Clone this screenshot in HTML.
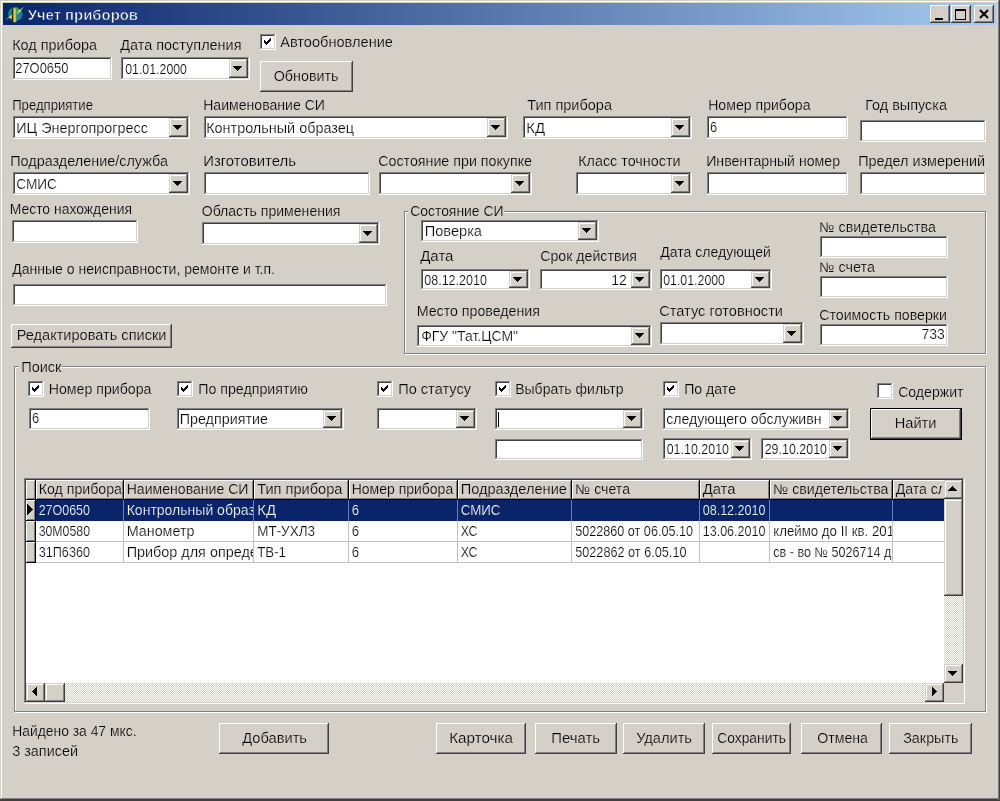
<!DOCTYPE html>
<html lang="ru"><head><meta charset="utf-8"><title>Учет приборов</title>
<style>html,body{margin:0;padding:0;background:#d4d0c8;overflow:hidden}body{width:1000px;height:801px;font-family:"Liberation Sans",sans-serif}</style>
</head><body>
<svg width="1000" height="801" viewBox="0 0 1000 801" font-family="'Liberation Sans', sans-serif" shape-rendering="crispEdges" style="display:block;will-change:transform">
<rect x="0" y="0" width="1000" height="801" fill="#d4d0c8"/>
<rect x="1" y="1" width="997" height="1" fill="#ffffff"/>
<rect x="1" y="1" width="1" height="798" fill="#ffffff"/>
<rect x="999" y="0" width="1" height="801" fill="#404040"/>
<rect x="0" y="799" width="1000" height="2" fill="#404040"/>
<rect x="998" y="1" width="1" height="799" fill="#808080"/>
<rect x="1" y="798" width="998" height="1" fill="#808080"/>
<defs><linearGradient id="tg" x1="0" x2="1" y1="0" y2="0"><stop offset="0" stop-color="#0a246a"/><stop offset="1" stop-color="#a6caf0"/></linearGradient><pattern id="dith" width="2" height="2" patternUnits="userSpaceOnUse"><rect width="2" height="2" fill="#d4d0c8"/><rect width="1" height="1" fill="#fff"/><rect x="1" y="1" width="1" height="1" fill="#fff"/></pattern></defs>
<rect x="3" y="3" width="993" height="22" fill="url(#tg)"/>
<g shape-rendering="geometricPrecision"><circle cx="15.2" cy="14.2" r="7" fill="#187f86"/><path d="M8.6 12.5 A7 7 0 0 1 19 8.3 L16 13 Z" fill="#1c9a58"/><path d="M16.5 13 L21.8 11.5 A7 7 0 0 1 19.5 19.8 L16.5 20 Z" fill="#1f7f9c"/><rect x="11.8" y="8.6" width="1.6" height="13.6" fill="#15301c"/><rect x="13.3" y="8.4" width="3" height="13.8" fill="#d4a82c"/><rect x="14.3" y="8.4" width="0.9" height="13.8" fill="#f0d868"/><path d="M24 6.8 L18.2 13.6 L17 11.6 L17 14.2 L18.6 12.6 L20 12.2 Z" fill="#e4f040"/><path d="M24 6.8 L19.6 10 L17.6 10.6 L18.4 12.8 Z" fill="#e4f040"/><path d="M5.8 19.8 L11.6 14.4 L11.8 18.4 L9.6 17.4 Z" fill="#e8f03c"/></g>
<text x="27.7" y="19.6" font-size="14" fill="#fff" textLength="110.3" lengthAdjust="spacingAndGlyphs" font-weight="bold" stroke="#112b73" stroke-width="0.55">Учет приборов</text>
<rect x="930" y="5" width="20" height="18" fill="#d4d0c8"/>
<rect x="930" y="5" width="19" height="1" fill="#ffffff"/>
<rect x="930" y="5" width="1" height="17" fill="#ffffff"/>
<rect x="930" y="22" width="20" height="1" fill="#404040"/>
<rect x="949" y="5" width="1" height="18" fill="#404040"/>
<rect x="931" y="6" width="17" height="1" fill="#d4d0c8"/>
<rect x="931" y="6" width="1" height="15" fill="#d4d0c8"/>
<rect x="931" y="21" width="18" height="1" fill="#808080"/>
<rect x="948" y="6" width="1" height="16" fill="#808080"/>
<rect x="935" y="18" width="8" height="2" fill="#000"/>
<rect x="951" y="5" width="20" height="18" fill="#d4d0c8"/>
<rect x="951" y="5" width="19" height="1" fill="#ffffff"/>
<rect x="951" y="5" width="1" height="17" fill="#ffffff"/>
<rect x="951" y="22" width="20" height="1" fill="#404040"/>
<rect x="970" y="5" width="1" height="18" fill="#404040"/>
<rect x="952" y="6" width="17" height="1" fill="#d4d0c8"/>
<rect x="952" y="6" width="1" height="15" fill="#d4d0c8"/>
<rect x="952" y="21" width="18" height="1" fill="#808080"/>
<rect x="969" y="6" width="1" height="16" fill="#808080"/>
<rect x="955" y="9" width="11" height="11" fill="#000"/>
<rect x="956" y="11" width="9" height="8" fill="#d4d0c8"/>
<rect x="974" y="5" width="20" height="18" fill="#d4d0c8"/>
<rect x="974" y="5" width="19" height="1" fill="#ffffff"/>
<rect x="974" y="5" width="1" height="17" fill="#ffffff"/>
<rect x="974" y="22" width="20" height="1" fill="#404040"/>
<rect x="993" y="5" width="1" height="18" fill="#404040"/>
<rect x="975" y="6" width="17" height="1" fill="#d4d0c8"/>
<rect x="975" y="6" width="1" height="15" fill="#d4d0c8"/>
<rect x="975" y="21" width="18" height="1" fill="#808080"/>
<rect x="992" y="6" width="1" height="16" fill="#808080"/>
<path d="M980 10 l8 8 M988 10 l-8 8" stroke="#000" stroke-width="2" fill="none" shape-rendering="geometricPrecision"/>
<text x="12.2" y="50.0" font-size="14" fill="#000000" textLength="84.8" lengthAdjust="spacingAndGlyphs" stroke="#d4d0c8" stroke-width="0.22">Код прибора</text>
<rect x="13" y="57" width="99" height="23" fill="#ffffff"/>
<rect x="13" y="57" width="98" height="1" fill="#808080"/>
<rect x="13" y="57" width="1" height="22" fill="#808080"/>
<rect x="13" y="79" width="99" height="1" fill="#ffffff"/>
<rect x="111" y="57" width="1" height="23" fill="#ffffff"/>
<rect x="14" y="58" width="96" height="1" fill="#404040"/>
<rect x="14" y="58" width="1" height="20" fill="#404040"/>
<rect x="14" y="78" width="97" height="1" fill="#d4d0c8"/>
<rect x="110" y="58" width="1" height="21" fill="#d4d0c8"/>
<text x="15.2" y="72.5" font-size="14" fill="#000000" textLength="53.3" lengthAdjust="spacingAndGlyphs" stroke="#ffffff" stroke-width="0.22">27О0650</text>
<text x="120.2" y="50.0" font-size="14" fill="#000000" textLength="121.3" lengthAdjust="spacingAndGlyphs" stroke="#d4d0c8" stroke-width="0.22">Дата поступления</text>
<rect x="121" y="57" width="129" height="23" fill="#ffffff"/>
<rect x="121" y="57" width="128" height="1" fill="#808080"/>
<rect x="121" y="57" width="1" height="22" fill="#808080"/>
<rect x="121" y="79" width="129" height="1" fill="#ffffff"/>
<rect x="249" y="57" width="1" height="23" fill="#ffffff"/>
<rect x="122" y="58" width="126" height="1" fill="#404040"/>
<rect x="122" y="58" width="1" height="20" fill="#404040"/>
<rect x="122" y="78" width="127" height="1" fill="#d4d0c8"/>
<rect x="248" y="58" width="1" height="21" fill="#d4d0c8"/>
<rect x="229" y="59" width="19" height="19" fill="#d4d0c8"/>
<rect x="229" y="59" width="18" height="1" fill="#d4d0c8"/>
<rect x="229" y="59" width="1" height="18" fill="#d4d0c8"/>
<rect x="229" y="77" width="19" height="1" fill="#404040"/>
<rect x="247" y="59" width="1" height="19" fill="#404040"/>
<rect x="230" y="60" width="16" height="1" fill="#ffffff"/>
<rect x="230" y="60" width="1" height="16" fill="#ffffff"/>
<rect x="230" y="76" width="17" height="1" fill="#808080"/>
<rect x="246" y="60" width="1" height="17" fill="#808080"/>
<rect x="233" y="66" width="9" height="1" fill="#000"/>
<rect x="234" y="67" width="7" height="1" fill="#000"/>
<rect x="235" y="68" width="5" height="1" fill="#000"/>
<rect x="236" y="69" width="3" height="1" fill="#000"/>
<rect x="237" y="70" width="1" height="1" fill="#000"/>
<text x="125.2" y="73.5" font-size="14" fill="#000000" textLength="61.8" lengthAdjust="spacingAndGlyphs" stroke="#ffffff" stroke-width="0.22">01.01.2000</text>
<rect x="260" y="34" width="16" height="16" fill="#ffffff"/>
<rect x="260" y="34" width="15" height="1" fill="#808080"/>
<rect x="260" y="34" width="1" height="15" fill="#808080"/>
<rect x="260" y="49" width="16" height="1" fill="#ffffff"/>
<rect x="275" y="34" width="1" height="16" fill="#ffffff"/>
<rect x="261" y="35" width="13" height="1" fill="#404040"/>
<rect x="261" y="35" width="1" height="13" fill="#404040"/>
<rect x="261" y="48" width="14" height="1" fill="#d4d0c8"/>
<rect x="274" y="35" width="1" height="14" fill="#d4d0c8"/>
<rect x="264" y="40" width="1" height="3" fill="#000"/>
<rect x="265" y="41" width="1" height="3" fill="#000"/>
<rect x="266" y="42" width="1" height="3" fill="#000"/>
<rect x="267" y="41" width="1" height="3" fill="#000"/>
<rect x="268" y="40" width="1" height="3" fill="#000"/>
<rect x="269" y="39" width="1" height="3" fill="#000"/>
<rect x="270" y="38" width="1" height="3" fill="#000"/>
<text x="280.2" y="47.0" font-size="14" fill="#000000" textLength="112.8" lengthAdjust="spacingAndGlyphs" stroke="#d4d0c8" stroke-width="0.22">Автообновление</text>
<rect x="260" y="61" width="93" height="31" fill="#d4d0c8"/>
<rect x="260" y="61" width="92" height="1" fill="#ffffff"/>
<rect x="260" y="61" width="1" height="30" fill="#ffffff"/>
<rect x="260" y="91" width="93" height="1" fill="#404040"/>
<rect x="352" y="61" width="1" height="31" fill="#404040"/>
<rect x="261" y="62" width="90" height="1" fill="#d4d0c8"/>
<rect x="261" y="62" width="1" height="28" fill="#d4d0c8"/>
<rect x="261" y="90" width="91" height="1" fill="#808080"/>
<rect x="351" y="62" width="1" height="29" fill="#808080"/>
<text x="273.7" y="80.5" font-size="14" fill="#000000" textLength="64.8" lengthAdjust="spacingAndGlyphs" stroke="#d4d0c8" stroke-width="0.22">Обновить</text>
<text x="12.2" y="109.5" font-size="14" fill="#000000" textLength="80.8" lengthAdjust="spacingAndGlyphs" stroke="#d4d0c8" stroke-width="0.22">Предприятие</text>
<rect x="13" y="116" width="177" height="23" fill="#ffffff"/>
<rect x="13" y="116" width="176" height="1" fill="#808080"/>
<rect x="13" y="116" width="1" height="22" fill="#808080"/>
<rect x="13" y="138" width="177" height="1" fill="#ffffff"/>
<rect x="189" y="116" width="1" height="23" fill="#ffffff"/>
<rect x="14" y="117" width="174" height="1" fill="#404040"/>
<rect x="14" y="117" width="1" height="20" fill="#404040"/>
<rect x="14" y="137" width="175" height="1" fill="#d4d0c8"/>
<rect x="188" y="117" width="1" height="21" fill="#d4d0c8"/>
<rect x="169" y="118" width="19" height="19" fill="#d4d0c8"/>
<rect x="169" y="118" width="18" height="1" fill="#d4d0c8"/>
<rect x="169" y="118" width="1" height="18" fill="#d4d0c8"/>
<rect x="169" y="136" width="19" height="1" fill="#404040"/>
<rect x="187" y="118" width="1" height="19" fill="#404040"/>
<rect x="170" y="119" width="16" height="1" fill="#ffffff"/>
<rect x="170" y="119" width="1" height="16" fill="#ffffff"/>
<rect x="170" y="135" width="17" height="1" fill="#808080"/>
<rect x="186" y="119" width="1" height="17" fill="#808080"/>
<rect x="173" y="125" width="9" height="1" fill="#000"/>
<rect x="174" y="126" width="7" height="1" fill="#000"/>
<rect x="175" y="127" width="5" height="1" fill="#000"/>
<rect x="176" y="128" width="3" height="1" fill="#000"/>
<rect x="177" y="129" width="1" height="1" fill="#000"/>
<text x="16.2" y="132.5" font-size="14" fill="#000000" textLength="131.8" lengthAdjust="spacingAndGlyphs" stroke="#ffffff" stroke-width="0.22">ИЦ Энергопрогресс</text>
<text x="203.2" y="109.5" font-size="14" fill="#000000" textLength="121.8" lengthAdjust="spacingAndGlyphs" stroke="#d4d0c8" stroke-width="0.22">Наименование СИ</text>
<rect x="204" y="116" width="304" height="23" fill="#ffffff"/>
<rect x="204" y="116" width="303" height="1" fill="#808080"/>
<rect x="204" y="116" width="1" height="22" fill="#808080"/>
<rect x="204" y="138" width="304" height="1" fill="#ffffff"/>
<rect x="507" y="116" width="1" height="23" fill="#ffffff"/>
<rect x="205" y="117" width="301" height="1" fill="#404040"/>
<rect x="205" y="117" width="1" height="20" fill="#404040"/>
<rect x="205" y="137" width="302" height="1" fill="#d4d0c8"/>
<rect x="506" y="117" width="1" height="21" fill="#d4d0c8"/>
<rect x="487" y="118" width="19" height="19" fill="#d4d0c8"/>
<rect x="487" y="118" width="18" height="1" fill="#d4d0c8"/>
<rect x="487" y="118" width="1" height="18" fill="#d4d0c8"/>
<rect x="487" y="136" width="19" height="1" fill="#404040"/>
<rect x="505" y="118" width="1" height="19" fill="#404040"/>
<rect x="488" y="119" width="16" height="1" fill="#ffffff"/>
<rect x="488" y="119" width="1" height="16" fill="#ffffff"/>
<rect x="488" y="135" width="17" height="1" fill="#808080"/>
<rect x="504" y="119" width="1" height="17" fill="#808080"/>
<rect x="491" y="125" width="9" height="1" fill="#000"/>
<rect x="492" y="126" width="7" height="1" fill="#000"/>
<rect x="493" y="127" width="5" height="1" fill="#000"/>
<rect x="494" y="128" width="3" height="1" fill="#000"/>
<rect x="495" y="129" width="1" height="1" fill="#000"/>
<text x="206.2" y="132.5" font-size="14" fill="#000000" textLength="147.8" lengthAdjust="spacingAndGlyphs" stroke="#ffffff" stroke-width="0.22">Контрольный образец</text>
<text x="527.2" y="109.5" font-size="14" fill="#000000" textLength="84.8" lengthAdjust="spacingAndGlyphs" stroke="#d4d0c8" stroke-width="0.22">Тип прибора</text>
<rect x="523" y="116" width="169" height="23" fill="#ffffff"/>
<rect x="523" y="116" width="168" height="1" fill="#808080"/>
<rect x="523" y="116" width="1" height="22" fill="#808080"/>
<rect x="523" y="138" width="169" height="1" fill="#ffffff"/>
<rect x="691" y="116" width="1" height="23" fill="#ffffff"/>
<rect x="524" y="117" width="166" height="1" fill="#404040"/>
<rect x="524" y="117" width="1" height="20" fill="#404040"/>
<rect x="524" y="137" width="167" height="1" fill="#d4d0c8"/>
<rect x="690" y="117" width="1" height="21" fill="#d4d0c8"/>
<rect x="671" y="118" width="19" height="19" fill="#d4d0c8"/>
<rect x="671" y="118" width="18" height="1" fill="#d4d0c8"/>
<rect x="671" y="118" width="1" height="18" fill="#d4d0c8"/>
<rect x="671" y="136" width="19" height="1" fill="#404040"/>
<rect x="689" y="118" width="1" height="19" fill="#404040"/>
<rect x="672" y="119" width="16" height="1" fill="#ffffff"/>
<rect x="672" y="119" width="1" height="16" fill="#ffffff"/>
<rect x="672" y="135" width="17" height="1" fill="#808080"/>
<rect x="688" y="119" width="1" height="17" fill="#808080"/>
<rect x="675" y="125" width="9" height="1" fill="#000"/>
<rect x="676" y="126" width="7" height="1" fill="#000"/>
<rect x="677" y="127" width="5" height="1" fill="#000"/>
<rect x="678" y="128" width="3" height="1" fill="#000"/>
<rect x="679" y="129" width="1" height="1" fill="#000"/>
<text x="526.2" y="132.5" font-size="14" fill="#000000" textLength="18.8" lengthAdjust="spacingAndGlyphs" stroke="#ffffff" stroke-width="0.22">КД</text>
<text x="708.2" y="109.5" font-size="14" fill="#000000" textLength="102.3" lengthAdjust="spacingAndGlyphs" stroke="#d4d0c8" stroke-width="0.22">Номер прибора</text>
<rect x="707" y="116" width="141" height="23" fill="#ffffff"/>
<rect x="707" y="116" width="140" height="1" fill="#808080"/>
<rect x="707" y="116" width="1" height="22" fill="#808080"/>
<rect x="707" y="138" width="141" height="1" fill="#ffffff"/>
<rect x="847" y="116" width="1" height="23" fill="#ffffff"/>
<rect x="708" y="117" width="138" height="1" fill="#404040"/>
<rect x="708" y="117" width="1" height="20" fill="#404040"/>
<rect x="708" y="137" width="139" height="1" fill="#d4d0c8"/>
<rect x="846" y="117" width="1" height="21" fill="#d4d0c8"/>
<text x="710.0" y="131.5" font-size="14" fill="#000000" textLength="7.2" lengthAdjust="spacingAndGlyphs" stroke="#ffffff" stroke-width="0.22">6</text>
<text x="865.2" y="109.5" font-size="14" fill="#000000" textLength="81.8" lengthAdjust="spacingAndGlyphs" stroke="#d4d0c8" stroke-width="0.22">Год выпуска</text>
<rect x="860" y="120" width="126" height="22" fill="#ffffff"/>
<rect x="860" y="120" width="125" height="1" fill="#808080"/>
<rect x="860" y="120" width="1" height="21" fill="#808080"/>
<rect x="860" y="141" width="126" height="1" fill="#ffffff"/>
<rect x="985" y="120" width="1" height="22" fill="#ffffff"/>
<rect x="861" y="121" width="123" height="1" fill="#404040"/>
<rect x="861" y="121" width="1" height="19" fill="#404040"/>
<rect x="861" y="140" width="124" height="1" fill="#d4d0c8"/>
<rect x="984" y="121" width="1" height="20" fill="#d4d0c8"/>
<text x="10.2" y="165.5" font-size="14" fill="#000000" textLength="157.8" lengthAdjust="spacingAndGlyphs" stroke="#d4d0c8" stroke-width="0.22">Подразделение/служба</text>
<rect x="13" y="172" width="177" height="23" fill="#ffffff"/>
<rect x="13" y="172" width="176" height="1" fill="#808080"/>
<rect x="13" y="172" width="1" height="22" fill="#808080"/>
<rect x="13" y="194" width="177" height="1" fill="#ffffff"/>
<rect x="189" y="172" width="1" height="23" fill="#ffffff"/>
<rect x="14" y="173" width="174" height="1" fill="#404040"/>
<rect x="14" y="173" width="1" height="20" fill="#404040"/>
<rect x="14" y="193" width="175" height="1" fill="#d4d0c8"/>
<rect x="188" y="173" width="1" height="21" fill="#d4d0c8"/>
<rect x="169" y="174" width="19" height="19" fill="#d4d0c8"/>
<rect x="169" y="174" width="18" height="1" fill="#d4d0c8"/>
<rect x="169" y="174" width="1" height="18" fill="#d4d0c8"/>
<rect x="169" y="192" width="19" height="1" fill="#404040"/>
<rect x="187" y="174" width="1" height="19" fill="#404040"/>
<rect x="170" y="175" width="16" height="1" fill="#ffffff"/>
<rect x="170" y="175" width="1" height="16" fill="#ffffff"/>
<rect x="170" y="191" width="17" height="1" fill="#808080"/>
<rect x="186" y="175" width="1" height="17" fill="#808080"/>
<rect x="173" y="181" width="9" height="1" fill="#000"/>
<rect x="174" y="182" width="7" height="1" fill="#000"/>
<rect x="175" y="183" width="5" height="1" fill="#000"/>
<rect x="176" y="184" width="3" height="1" fill="#000"/>
<rect x="177" y="185" width="1" height="1" fill="#000"/>
<text x="16.2" y="188.5" font-size="14" fill="#000000" textLength="40.8" lengthAdjust="spacingAndGlyphs" stroke="#ffffff" stroke-width="0.22">СМИС</text>
<text x="203.2" y="165.5" font-size="14" fill="#000000" textLength="92.8" lengthAdjust="spacingAndGlyphs" stroke="#d4d0c8" stroke-width="0.22">Изготовитель</text>
<rect x="204" y="172" width="166" height="23" fill="#ffffff"/>
<rect x="204" y="172" width="165" height="1" fill="#808080"/>
<rect x="204" y="172" width="1" height="22" fill="#808080"/>
<rect x="204" y="194" width="166" height="1" fill="#ffffff"/>
<rect x="369" y="172" width="1" height="23" fill="#ffffff"/>
<rect x="205" y="173" width="163" height="1" fill="#404040"/>
<rect x="205" y="173" width="1" height="20" fill="#404040"/>
<rect x="205" y="193" width="164" height="1" fill="#d4d0c8"/>
<rect x="368" y="173" width="1" height="21" fill="#d4d0c8"/>
<text x="378.2" y="165.5" font-size="14" fill="#000000" textLength="153.8" lengthAdjust="spacingAndGlyphs" stroke="#d4d0c8" stroke-width="0.22">Состояние при покупке</text>
<rect x="379" y="172" width="153" height="23" fill="#ffffff"/>
<rect x="379" y="172" width="152" height="1" fill="#808080"/>
<rect x="379" y="172" width="1" height="22" fill="#808080"/>
<rect x="379" y="194" width="153" height="1" fill="#ffffff"/>
<rect x="531" y="172" width="1" height="23" fill="#ffffff"/>
<rect x="380" y="173" width="150" height="1" fill="#404040"/>
<rect x="380" y="173" width="1" height="20" fill="#404040"/>
<rect x="380" y="193" width="151" height="1" fill="#d4d0c8"/>
<rect x="530" y="173" width="1" height="21" fill="#d4d0c8"/>
<rect x="511" y="174" width="19" height="19" fill="#d4d0c8"/>
<rect x="511" y="174" width="18" height="1" fill="#d4d0c8"/>
<rect x="511" y="174" width="1" height="18" fill="#d4d0c8"/>
<rect x="511" y="192" width="19" height="1" fill="#404040"/>
<rect x="529" y="174" width="1" height="19" fill="#404040"/>
<rect x="512" y="175" width="16" height="1" fill="#ffffff"/>
<rect x="512" y="175" width="1" height="16" fill="#ffffff"/>
<rect x="512" y="191" width="17" height="1" fill="#808080"/>
<rect x="528" y="175" width="1" height="17" fill="#808080"/>
<rect x="515" y="181" width="9" height="1" fill="#000"/>
<rect x="516" y="182" width="7" height="1" fill="#000"/>
<rect x="517" y="183" width="5" height="1" fill="#000"/>
<rect x="518" y="184" width="3" height="1" fill="#000"/>
<rect x="519" y="185" width="1" height="1" fill="#000"/>
<text x="578.2" y="165.5" font-size="14" fill="#000000" textLength="102.3" lengthAdjust="spacingAndGlyphs" stroke="#d4d0c8" stroke-width="0.22">Класс точности</text>
<rect x="576" y="172" width="116" height="23" fill="#ffffff"/>
<rect x="576" y="172" width="115" height="1" fill="#808080"/>
<rect x="576" y="172" width="1" height="22" fill="#808080"/>
<rect x="576" y="194" width="116" height="1" fill="#ffffff"/>
<rect x="691" y="172" width="1" height="23" fill="#ffffff"/>
<rect x="577" y="173" width="113" height="1" fill="#404040"/>
<rect x="577" y="173" width="1" height="20" fill="#404040"/>
<rect x="577" y="193" width="114" height="1" fill="#d4d0c8"/>
<rect x="690" y="173" width="1" height="21" fill="#d4d0c8"/>
<rect x="671" y="174" width="19" height="19" fill="#d4d0c8"/>
<rect x="671" y="174" width="18" height="1" fill="#d4d0c8"/>
<rect x="671" y="174" width="1" height="18" fill="#d4d0c8"/>
<rect x="671" y="192" width="19" height="1" fill="#404040"/>
<rect x="689" y="174" width="1" height="19" fill="#404040"/>
<rect x="672" y="175" width="16" height="1" fill="#ffffff"/>
<rect x="672" y="175" width="1" height="16" fill="#ffffff"/>
<rect x="672" y="191" width="17" height="1" fill="#808080"/>
<rect x="688" y="175" width="1" height="17" fill="#808080"/>
<rect x="675" y="181" width="9" height="1" fill="#000"/>
<rect x="676" y="182" width="7" height="1" fill="#000"/>
<rect x="677" y="183" width="5" height="1" fill="#000"/>
<rect x="678" y="184" width="3" height="1" fill="#000"/>
<rect x="679" y="185" width="1" height="1" fill="#000"/>
<text x="706.2" y="165.5" font-size="14" fill="#000000" textLength="133.8" lengthAdjust="spacingAndGlyphs" stroke="#d4d0c8" stroke-width="0.22">Инвентарный номер</text>
<rect x="707" y="172" width="141" height="23" fill="#ffffff"/>
<rect x="707" y="172" width="140" height="1" fill="#808080"/>
<rect x="707" y="172" width="1" height="22" fill="#808080"/>
<rect x="707" y="194" width="141" height="1" fill="#ffffff"/>
<rect x="847" y="172" width="1" height="23" fill="#ffffff"/>
<rect x="708" y="173" width="138" height="1" fill="#404040"/>
<rect x="708" y="173" width="1" height="20" fill="#404040"/>
<rect x="708" y="193" width="139" height="1" fill="#d4d0c8"/>
<rect x="846" y="173" width="1" height="21" fill="#d4d0c8"/>
<text x="858.2" y="165.5" font-size="14" fill="#000000" textLength="126.8" lengthAdjust="spacingAndGlyphs" stroke="#d4d0c8" stroke-width="0.22">Предел измерений</text>
<rect x="860" y="172" width="126" height="23" fill="#ffffff"/>
<rect x="860" y="172" width="125" height="1" fill="#808080"/>
<rect x="860" y="172" width="1" height="22" fill="#808080"/>
<rect x="860" y="194" width="126" height="1" fill="#ffffff"/>
<rect x="985" y="172" width="1" height="23" fill="#ffffff"/>
<rect x="861" y="173" width="123" height="1" fill="#404040"/>
<rect x="861" y="173" width="1" height="20" fill="#404040"/>
<rect x="861" y="193" width="124" height="1" fill="#d4d0c8"/>
<rect x="984" y="173" width="1" height="21" fill="#d4d0c8"/>
<text x="9.7" y="213.5" font-size="14" fill="#000000" textLength="122.3" lengthAdjust="spacingAndGlyphs" stroke="#d4d0c8" stroke-width="0.22">Место нахождения</text>
<rect x="12" y="220" width="126" height="23" fill="#ffffff"/>
<rect x="12" y="220" width="125" height="1" fill="#808080"/>
<rect x="12" y="220" width="1" height="22" fill="#808080"/>
<rect x="12" y="242" width="126" height="1" fill="#ffffff"/>
<rect x="137" y="220" width="1" height="23" fill="#ffffff"/>
<rect x="13" y="221" width="123" height="1" fill="#404040"/>
<rect x="13" y="221" width="1" height="20" fill="#404040"/>
<rect x="13" y="241" width="124" height="1" fill="#d4d0c8"/>
<rect x="136" y="221" width="1" height="21" fill="#d4d0c8"/>
<text x="201.7" y="215.5" font-size="14" fill="#000000" textLength="138.8" lengthAdjust="spacingAndGlyphs" stroke="#d4d0c8" stroke-width="0.22">Область применения</text>
<rect x="202" y="222" width="178" height="23" fill="#ffffff"/>
<rect x="202" y="222" width="177" height="1" fill="#808080"/>
<rect x="202" y="222" width="1" height="22" fill="#808080"/>
<rect x="202" y="244" width="178" height="1" fill="#ffffff"/>
<rect x="379" y="222" width="1" height="23" fill="#ffffff"/>
<rect x="203" y="223" width="175" height="1" fill="#404040"/>
<rect x="203" y="223" width="1" height="20" fill="#404040"/>
<rect x="203" y="243" width="176" height="1" fill="#d4d0c8"/>
<rect x="378" y="223" width="1" height="21" fill="#d4d0c8"/>
<rect x="359" y="224" width="19" height="19" fill="#d4d0c8"/>
<rect x="359" y="224" width="18" height="1" fill="#d4d0c8"/>
<rect x="359" y="224" width="1" height="18" fill="#d4d0c8"/>
<rect x="359" y="242" width="19" height="1" fill="#404040"/>
<rect x="377" y="224" width="1" height="19" fill="#404040"/>
<rect x="360" y="225" width="16" height="1" fill="#ffffff"/>
<rect x="360" y="225" width="1" height="16" fill="#ffffff"/>
<rect x="360" y="241" width="17" height="1" fill="#808080"/>
<rect x="376" y="225" width="1" height="17" fill="#808080"/>
<rect x="363" y="231" width="9" height="1" fill="#000"/>
<rect x="364" y="232" width="7" height="1" fill="#000"/>
<rect x="365" y="233" width="5" height="1" fill="#000"/>
<rect x="366" y="234" width="3" height="1" fill="#000"/>
<rect x="367" y="235" width="1" height="1" fill="#000"/>
<text x="12.2" y="273.5" font-size="14" fill="#000000" textLength="262.8" lengthAdjust="spacingAndGlyphs" stroke="#d4d0c8" stroke-width="0.22">Данные о неисправности, ремонте и т.п.</text>
<rect x="13" y="284" width="374" height="22" fill="#ffffff"/>
<rect x="13" y="284" width="373" height="1" fill="#808080"/>
<rect x="13" y="284" width="1" height="21" fill="#808080"/>
<rect x="13" y="305" width="374" height="1" fill="#ffffff"/>
<rect x="386" y="284" width="1" height="22" fill="#ffffff"/>
<rect x="14" y="285" width="371" height="1" fill="#404040"/>
<rect x="14" y="285" width="1" height="19" fill="#404040"/>
<rect x="14" y="304" width="372" height="1" fill="#d4d0c8"/>
<rect x="385" y="285" width="1" height="20" fill="#d4d0c8"/>
<rect x="11" y="324" width="161" height="24" fill="#d4d0c8"/>
<rect x="11" y="324" width="160" height="1" fill="#ffffff"/>
<rect x="11" y="324" width="1" height="23" fill="#ffffff"/>
<rect x="11" y="347" width="161" height="1" fill="#404040"/>
<rect x="171" y="324" width="1" height="24" fill="#404040"/>
<rect x="12" y="325" width="158" height="1" fill="#d4d0c8"/>
<rect x="12" y="325" width="1" height="21" fill="#d4d0c8"/>
<rect x="12" y="346" width="159" height="1" fill="#808080"/>
<rect x="170" y="325" width="1" height="22" fill="#808080"/>
<text x="16.7" y="339.5" font-size="14" fill="#000000" textLength="149.8" lengthAdjust="spacingAndGlyphs" stroke="#d4d0c8" stroke-width="0.22">Редактировать списки</text>
<rect x="405" y="212" width="582" height="1" fill="#ffffff"/>
<rect x="405" y="354" width="582" height="1" fill="#ffffff"/>
<rect x="405" y="212" width="1" height="143" fill="#ffffff"/>
<rect x="986" y="212" width="1" height="143" fill="#ffffff"/>
<rect x="404" y="211" width="582" height="1" fill="#808080"/>
<rect x="404" y="353" width="582" height="1" fill="#808080"/>
<rect x="404" y="211" width="1" height="143" fill="#808080"/>
<rect x="985" y="211" width="1" height="143" fill="#808080"/>
<rect x="408" y="210" width="96" height="4" fill="#d4d0c8"/>
<text x="410.2" y="216.0" font-size="14" fill="#000000" textLength="93.3" lengthAdjust="spacingAndGlyphs" stroke="#d4d0c8" stroke-width="0.22">Состояние СИ</text>
<rect x="421" y="220" width="178" height="22" fill="#ffffff"/>
<rect x="421" y="220" width="177" height="1" fill="#808080"/>
<rect x="421" y="220" width="1" height="21" fill="#808080"/>
<rect x="421" y="241" width="178" height="1" fill="#ffffff"/>
<rect x="598" y="220" width="1" height="22" fill="#ffffff"/>
<rect x="422" y="221" width="175" height="1" fill="#404040"/>
<rect x="422" y="221" width="1" height="19" fill="#404040"/>
<rect x="422" y="240" width="176" height="1" fill="#d4d0c8"/>
<rect x="597" y="221" width="1" height="20" fill="#d4d0c8"/>
<rect x="578" y="222" width="19" height="18" fill="#d4d0c8"/>
<rect x="578" y="222" width="18" height="1" fill="#d4d0c8"/>
<rect x="578" y="222" width="1" height="17" fill="#d4d0c8"/>
<rect x="578" y="239" width="19" height="1" fill="#404040"/>
<rect x="596" y="222" width="1" height="18" fill="#404040"/>
<rect x="579" y="223" width="16" height="1" fill="#ffffff"/>
<rect x="579" y="223" width="1" height="15" fill="#ffffff"/>
<rect x="579" y="238" width="17" height="1" fill="#808080"/>
<rect x="595" y="223" width="1" height="16" fill="#808080"/>
<rect x="582" y="228" width="9" height="1" fill="#000"/>
<rect x="583" y="229" width="7" height="1" fill="#000"/>
<rect x="584" y="230" width="5" height="1" fill="#000"/>
<rect x="585" y="231" width="3" height="1" fill="#000"/>
<rect x="586" y="232" width="1" height="1" fill="#000"/>
<text x="424.7" y="236.0" font-size="14" fill="#000000" textLength="57.3" lengthAdjust="spacingAndGlyphs" stroke="#ffffff" stroke-width="0.22">Поверка</text>
<text x="420.2" y="260.5" font-size="14" fill="#000000" textLength="33.3" lengthAdjust="spacingAndGlyphs" stroke="#d4d0c8" stroke-width="0.22">Дата</text>
<rect x="421" y="269" width="109" height="21" fill="#ffffff"/>
<rect x="421" y="269" width="108" height="1" fill="#808080"/>
<rect x="421" y="269" width="1" height="20" fill="#808080"/>
<rect x="421" y="289" width="109" height="1" fill="#ffffff"/>
<rect x="529" y="269" width="1" height="21" fill="#ffffff"/>
<rect x="422" y="270" width="106" height="1" fill="#404040"/>
<rect x="422" y="270" width="1" height="18" fill="#404040"/>
<rect x="422" y="288" width="107" height="1" fill="#d4d0c8"/>
<rect x="528" y="270" width="1" height="19" fill="#d4d0c8"/>
<rect x="509" y="271" width="19" height="17" fill="#d4d0c8"/>
<rect x="509" y="271" width="18" height="1" fill="#d4d0c8"/>
<rect x="509" y="271" width="1" height="16" fill="#d4d0c8"/>
<rect x="509" y="287" width="19" height="1" fill="#404040"/>
<rect x="527" y="271" width="1" height="17" fill="#404040"/>
<rect x="510" y="272" width="16" height="1" fill="#ffffff"/>
<rect x="510" y="272" width="1" height="14" fill="#ffffff"/>
<rect x="510" y="286" width="17" height="1" fill="#808080"/>
<rect x="526" y="272" width="1" height="15" fill="#808080"/>
<rect x="513" y="277" width="9" height="1" fill="#000"/>
<rect x="514" y="278" width="7" height="1" fill="#000"/>
<rect x="515" y="279" width="5" height="1" fill="#000"/>
<rect x="516" y="280" width="3" height="1" fill="#000"/>
<rect x="517" y="281" width="1" height="1" fill="#000"/>
<text x="424.2" y="284.5" font-size="14" fill="#000000" textLength="62.8" lengthAdjust="spacingAndGlyphs" stroke="#ffffff" stroke-width="0.22">08.12.2010</text>
<text x="540.2" y="260.5" font-size="14" fill="#000000" textLength="96.8" lengthAdjust="spacingAndGlyphs" stroke="#d4d0c8" stroke-width="0.22">Срок действия</text>
<rect x="540" y="269" width="112" height="21" fill="#ffffff"/>
<rect x="540" y="269" width="111" height="1" fill="#808080"/>
<rect x="540" y="269" width="1" height="20" fill="#808080"/>
<rect x="540" y="289" width="112" height="1" fill="#ffffff"/>
<rect x="651" y="269" width="1" height="21" fill="#ffffff"/>
<rect x="541" y="270" width="109" height="1" fill="#404040"/>
<rect x="541" y="270" width="1" height="18" fill="#404040"/>
<rect x="541" y="288" width="110" height="1" fill="#d4d0c8"/>
<rect x="650" y="270" width="1" height="19" fill="#d4d0c8"/>
<rect x="631" y="271" width="19" height="17" fill="#d4d0c8"/>
<rect x="631" y="271" width="18" height="1" fill="#d4d0c8"/>
<rect x="631" y="271" width="1" height="16" fill="#d4d0c8"/>
<rect x="631" y="287" width="19" height="1" fill="#404040"/>
<rect x="649" y="271" width="1" height="17" fill="#404040"/>
<rect x="632" y="272" width="16" height="1" fill="#ffffff"/>
<rect x="632" y="272" width="1" height="14" fill="#ffffff"/>
<rect x="632" y="286" width="17" height="1" fill="#808080"/>
<rect x="648" y="272" width="1" height="15" fill="#808080"/>
<rect x="635" y="277" width="9" height="1" fill="#000"/>
<rect x="636" y="278" width="7" height="1" fill="#000"/>
<rect x="637" y="279" width="5" height="1" fill="#000"/>
<rect x="638" y="280" width="3" height="1" fill="#000"/>
<rect x="639" y="281" width="1" height="1" fill="#000"/>
<text x="626.8" y="284.5" font-size="14" fill="#000000" text-anchor="end" stroke="#ffffff" stroke-width="0.22">12</text>
<text x="660.2" y="257.0" font-size="14" fill="#000000" textLength="110.8" lengthAdjust="spacingAndGlyphs" stroke="#d4d0c8" stroke-width="0.22">Дата следующей</text>
<rect x="660" y="269" width="112" height="21" fill="#ffffff"/>
<rect x="660" y="269" width="111" height="1" fill="#808080"/>
<rect x="660" y="269" width="1" height="20" fill="#808080"/>
<rect x="660" y="289" width="112" height="1" fill="#ffffff"/>
<rect x="771" y="269" width="1" height="21" fill="#ffffff"/>
<rect x="661" y="270" width="109" height="1" fill="#404040"/>
<rect x="661" y="270" width="1" height="18" fill="#404040"/>
<rect x="661" y="288" width="110" height="1" fill="#d4d0c8"/>
<rect x="770" y="270" width="1" height="19" fill="#d4d0c8"/>
<rect x="751" y="271" width="19" height="17" fill="#d4d0c8"/>
<rect x="751" y="271" width="18" height="1" fill="#d4d0c8"/>
<rect x="751" y="271" width="1" height="16" fill="#d4d0c8"/>
<rect x="751" y="287" width="19" height="1" fill="#404040"/>
<rect x="769" y="271" width="1" height="17" fill="#404040"/>
<rect x="752" y="272" width="16" height="1" fill="#ffffff"/>
<rect x="752" y="272" width="1" height="14" fill="#ffffff"/>
<rect x="752" y="286" width="17" height="1" fill="#808080"/>
<rect x="768" y="272" width="1" height="15" fill="#808080"/>
<rect x="755" y="277" width="9" height="1" fill="#000"/>
<rect x="756" y="278" width="7" height="1" fill="#000"/>
<rect x="757" y="279" width="5" height="1" fill="#000"/>
<rect x="758" y="280" width="3" height="1" fill="#000"/>
<rect x="759" y="281" width="1" height="1" fill="#000"/>
<text x="663.2" y="284.5" font-size="14" fill="#000000" textLength="61.8" lengthAdjust="spacingAndGlyphs" stroke="#ffffff" stroke-width="0.22">01.01.2000</text>
<text x="416.7" y="316.0" font-size="14" fill="#000000" textLength="123.3" lengthAdjust="spacingAndGlyphs" stroke="#d4d0c8" stroke-width="0.22">Место проведения</text>
<rect x="417" y="325" width="235" height="22" fill="#ffffff"/>
<rect x="417" y="325" width="234" height="1" fill="#808080"/>
<rect x="417" y="325" width="1" height="21" fill="#808080"/>
<rect x="417" y="346" width="235" height="1" fill="#ffffff"/>
<rect x="651" y="325" width="1" height="22" fill="#ffffff"/>
<rect x="418" y="326" width="232" height="1" fill="#404040"/>
<rect x="418" y="326" width="1" height="19" fill="#404040"/>
<rect x="418" y="345" width="233" height="1" fill="#d4d0c8"/>
<rect x="650" y="326" width="1" height="20" fill="#d4d0c8"/>
<rect x="631" y="327" width="19" height="18" fill="#d4d0c8"/>
<rect x="631" y="327" width="18" height="1" fill="#d4d0c8"/>
<rect x="631" y="327" width="1" height="17" fill="#d4d0c8"/>
<rect x="631" y="344" width="19" height="1" fill="#404040"/>
<rect x="649" y="327" width="1" height="18" fill="#404040"/>
<rect x="632" y="328" width="16" height="1" fill="#ffffff"/>
<rect x="632" y="328" width="1" height="15" fill="#ffffff"/>
<rect x="632" y="343" width="17" height="1" fill="#808080"/>
<rect x="648" y="328" width="1" height="16" fill="#808080"/>
<rect x="635" y="333" width="9" height="1" fill="#000"/>
<rect x="636" y="334" width="7" height="1" fill="#000"/>
<rect x="637" y="335" width="5" height="1" fill="#000"/>
<rect x="638" y="336" width="3" height="1" fill="#000"/>
<rect x="639" y="337" width="1" height="1" fill="#000"/>
<text x="421.2" y="341.0" font-size="14" fill="#000000" textLength="96.8" lengthAdjust="spacingAndGlyphs" stroke="#ffffff" stroke-width="0.22">ФГУ &quot;Тат.ЦСМ&quot;</text>
<text x="659.2" y="316.0" font-size="14" fill="#000000" textLength="123.8" lengthAdjust="spacingAndGlyphs" stroke="#d4d0c8" stroke-width="0.22">Статус готовности</text>
<rect x="660" y="322" width="144" height="23" fill="#ffffff"/>
<rect x="660" y="322" width="143" height="1" fill="#808080"/>
<rect x="660" y="322" width="1" height="22" fill="#808080"/>
<rect x="660" y="344" width="144" height="1" fill="#ffffff"/>
<rect x="803" y="322" width="1" height="23" fill="#ffffff"/>
<rect x="661" y="323" width="141" height="1" fill="#404040"/>
<rect x="661" y="323" width="1" height="20" fill="#404040"/>
<rect x="661" y="343" width="142" height="1" fill="#d4d0c8"/>
<rect x="802" y="323" width="1" height="21" fill="#d4d0c8"/>
<rect x="783" y="324" width="19" height="19" fill="#d4d0c8"/>
<rect x="783" y="324" width="18" height="1" fill="#d4d0c8"/>
<rect x="783" y="324" width="1" height="18" fill="#d4d0c8"/>
<rect x="783" y="342" width="19" height="1" fill="#404040"/>
<rect x="801" y="324" width="1" height="19" fill="#404040"/>
<rect x="784" y="325" width="16" height="1" fill="#ffffff"/>
<rect x="784" y="325" width="1" height="16" fill="#ffffff"/>
<rect x="784" y="341" width="17" height="1" fill="#808080"/>
<rect x="800" y="325" width="1" height="17" fill="#808080"/>
<rect x="787" y="331" width="9" height="1" fill="#000"/>
<rect x="788" y="332" width="7" height="1" fill="#000"/>
<rect x="789" y="333" width="5" height="1" fill="#000"/>
<rect x="790" y="334" width="3" height="1" fill="#000"/>
<rect x="791" y="335" width="1" height="1" fill="#000"/>
<text x="819.2" y="232.0" font-size="14" fill="#000000" textLength="116.8" lengthAdjust="spacingAndGlyphs" stroke="#d4d0c8" stroke-width="0.22">№ свидетельства</text>
<rect x="820" y="236" width="128" height="22" fill="#ffffff"/>
<rect x="820" y="236" width="127" height="1" fill="#808080"/>
<rect x="820" y="236" width="1" height="21" fill="#808080"/>
<rect x="820" y="257" width="128" height="1" fill="#ffffff"/>
<rect x="947" y="236" width="1" height="22" fill="#ffffff"/>
<rect x="821" y="237" width="125" height="1" fill="#404040"/>
<rect x="821" y="237" width="1" height="19" fill="#404040"/>
<rect x="821" y="256" width="126" height="1" fill="#d4d0c8"/>
<rect x="946" y="237" width="1" height="20" fill="#d4d0c8"/>
<text x="819.2" y="272.0" font-size="14" fill="#000000" textLength="55.8" lengthAdjust="spacingAndGlyphs" stroke="#d4d0c8" stroke-width="0.22">№ счета</text>
<rect x="820" y="276" width="128" height="22" fill="#ffffff"/>
<rect x="820" y="276" width="127" height="1" fill="#808080"/>
<rect x="820" y="276" width="1" height="21" fill="#808080"/>
<rect x="820" y="297" width="128" height="1" fill="#ffffff"/>
<rect x="947" y="276" width="1" height="22" fill="#ffffff"/>
<rect x="821" y="277" width="125" height="1" fill="#404040"/>
<rect x="821" y="277" width="1" height="19" fill="#404040"/>
<rect x="821" y="296" width="126" height="1" fill="#d4d0c8"/>
<rect x="946" y="277" width="1" height="20" fill="#d4d0c8"/>
<text x="819.2" y="319.5" font-size="14" fill="#000000" textLength="127.8" lengthAdjust="spacingAndGlyphs" stroke="#d4d0c8" stroke-width="0.22">Стоимость поверки</text>
<rect x="820" y="324" width="128" height="22" fill="#ffffff"/>
<rect x="820" y="324" width="127" height="1" fill="#808080"/>
<rect x="820" y="324" width="1" height="21" fill="#808080"/>
<rect x="820" y="345" width="128" height="1" fill="#ffffff"/>
<rect x="947" y="324" width="1" height="22" fill="#ffffff"/>
<rect x="821" y="325" width="125" height="1" fill="#404040"/>
<rect x="821" y="325" width="1" height="19" fill="#404040"/>
<rect x="821" y="344" width="126" height="1" fill="#d4d0c8"/>
<rect x="946" y="325" width="1" height="20" fill="#d4d0c8"/>
<text x="944.8" y="339.0" font-size="14" fill="#000000" text-anchor="end" stroke="#ffffff" stroke-width="0.22">733</text>
<rect x="15" y="367" width="972" height="1" fill="#ffffff"/>
<rect x="15" y="712" width="972" height="1" fill="#ffffff"/>
<rect x="15" y="367" width="1" height="346" fill="#ffffff"/>
<rect x="986" y="367" width="1" height="346" fill="#ffffff"/>
<rect x="14" y="366" width="972" height="1" fill="#808080"/>
<rect x="14" y="711" width="972" height="1" fill="#808080"/>
<rect x="14" y="366" width="1" height="346" fill="#808080"/>
<rect x="985" y="366" width="1" height="346" fill="#808080"/>
<rect x="19" y="365" width="43" height="4" fill="#d4d0c8"/>
<text x="21.2" y="371.5" font-size="14" fill="#000000" textLength="40.3" lengthAdjust="spacingAndGlyphs" stroke="#d4d0c8" stroke-width="0.22">Поиск</text>
<rect x="28" y="381" width="16" height="16" fill="#ffffff"/>
<rect x="28" y="381" width="15" height="1" fill="#808080"/>
<rect x="28" y="381" width="1" height="15" fill="#808080"/>
<rect x="28" y="396" width="16" height="1" fill="#ffffff"/>
<rect x="43" y="381" width="1" height="16" fill="#ffffff"/>
<rect x="29" y="382" width="13" height="1" fill="#404040"/>
<rect x="29" y="382" width="1" height="13" fill="#404040"/>
<rect x="29" y="395" width="14" height="1" fill="#d4d0c8"/>
<rect x="42" y="382" width="1" height="14" fill="#d4d0c8"/>
<rect x="32" y="387" width="1" height="3" fill="#000"/>
<rect x="33" y="388" width="1" height="3" fill="#000"/>
<rect x="34" y="389" width="1" height="3" fill="#000"/>
<rect x="35" y="388" width="1" height="3" fill="#000"/>
<rect x="36" y="387" width="1" height="3" fill="#000"/>
<rect x="37" y="386" width="1" height="3" fill="#000"/>
<rect x="38" y="385" width="1" height="3" fill="#000"/>
<text x="48.7" y="394.0" font-size="14" fill="#000000" textLength="102.8" lengthAdjust="spacingAndGlyphs" stroke="#d4d0c8" stroke-width="0.22">Номер прибора</text>
<rect x="29" y="408" width="121" height="22" fill="#ffffff"/>
<rect x="29" y="408" width="120" height="1" fill="#808080"/>
<rect x="29" y="408" width="1" height="21" fill="#808080"/>
<rect x="29" y="429" width="121" height="1" fill="#ffffff"/>
<rect x="149" y="408" width="1" height="22" fill="#ffffff"/>
<rect x="30" y="409" width="118" height="1" fill="#404040"/>
<rect x="30" y="409" width="1" height="19" fill="#404040"/>
<rect x="30" y="428" width="119" height="1" fill="#d4d0c8"/>
<rect x="148" y="409" width="1" height="20" fill="#d4d0c8"/>
<text x="31.9" y="423.0" font-size="14" fill="#000000" textLength="7.2" lengthAdjust="spacingAndGlyphs" stroke="#ffffff" stroke-width="0.22">6</text>
<rect x="177" y="381" width="16" height="16" fill="#ffffff"/>
<rect x="177" y="381" width="15" height="1" fill="#808080"/>
<rect x="177" y="381" width="1" height="15" fill="#808080"/>
<rect x="177" y="396" width="16" height="1" fill="#ffffff"/>
<rect x="192" y="381" width="1" height="16" fill="#ffffff"/>
<rect x="178" y="382" width="13" height="1" fill="#404040"/>
<rect x="178" y="382" width="1" height="13" fill="#404040"/>
<rect x="178" y="395" width="14" height="1" fill="#d4d0c8"/>
<rect x="191" y="382" width="1" height="14" fill="#d4d0c8"/>
<rect x="181" y="387" width="1" height="3" fill="#000"/>
<rect x="182" y="388" width="1" height="3" fill="#000"/>
<rect x="183" y="389" width="1" height="3" fill="#000"/>
<rect x="184" y="388" width="1" height="3" fill="#000"/>
<rect x="185" y="387" width="1" height="3" fill="#000"/>
<rect x="186" y="386" width="1" height="3" fill="#000"/>
<rect x="187" y="385" width="1" height="3" fill="#000"/>
<text x="198.2" y="394.0" font-size="14" fill="#000000" textLength="109.8" lengthAdjust="spacingAndGlyphs" stroke="#d4d0c8" stroke-width="0.22">По предприятию</text>
<rect x="177" y="408" width="167" height="22" fill="#ffffff"/>
<rect x="177" y="408" width="166" height="1" fill="#808080"/>
<rect x="177" y="408" width="1" height="21" fill="#808080"/>
<rect x="177" y="429" width="167" height="1" fill="#ffffff"/>
<rect x="343" y="408" width="1" height="22" fill="#ffffff"/>
<rect x="178" y="409" width="164" height="1" fill="#404040"/>
<rect x="178" y="409" width="1" height="19" fill="#404040"/>
<rect x="178" y="428" width="165" height="1" fill="#d4d0c8"/>
<rect x="342" y="409" width="1" height="20" fill="#d4d0c8"/>
<rect x="323" y="410" width="19" height="18" fill="#d4d0c8"/>
<rect x="323" y="410" width="18" height="1" fill="#d4d0c8"/>
<rect x="323" y="410" width="1" height="17" fill="#d4d0c8"/>
<rect x="323" y="427" width="19" height="1" fill="#404040"/>
<rect x="341" y="410" width="1" height="18" fill="#404040"/>
<rect x="324" y="411" width="16" height="1" fill="#ffffff"/>
<rect x="324" y="411" width="1" height="15" fill="#ffffff"/>
<rect x="324" y="426" width="17" height="1" fill="#808080"/>
<rect x="340" y="411" width="1" height="16" fill="#808080"/>
<rect x="327" y="416" width="9" height="1" fill="#000"/>
<rect x="328" y="417" width="7" height="1" fill="#000"/>
<rect x="329" y="418" width="5" height="1" fill="#000"/>
<rect x="330" y="419" width="3" height="1" fill="#000"/>
<rect x="331" y="420" width="1" height="1" fill="#000"/>
<text x="179.7" y="424.0" font-size="14" fill="#000000" textLength="88.3" lengthAdjust="spacingAndGlyphs" stroke="#ffffff" stroke-width="0.22">Предприятие</text>
<rect x="377" y="381" width="16" height="16" fill="#ffffff"/>
<rect x="377" y="381" width="15" height="1" fill="#808080"/>
<rect x="377" y="381" width="1" height="15" fill="#808080"/>
<rect x="377" y="396" width="16" height="1" fill="#ffffff"/>
<rect x="392" y="381" width="1" height="16" fill="#ffffff"/>
<rect x="378" y="382" width="13" height="1" fill="#404040"/>
<rect x="378" y="382" width="1" height="13" fill="#404040"/>
<rect x="378" y="395" width="14" height="1" fill="#d4d0c8"/>
<rect x="391" y="382" width="1" height="14" fill="#d4d0c8"/>
<rect x="381" y="387" width="1" height="3" fill="#000"/>
<rect x="382" y="388" width="1" height="3" fill="#000"/>
<rect x="383" y="389" width="1" height="3" fill="#000"/>
<rect x="384" y="388" width="1" height="3" fill="#000"/>
<rect x="385" y="387" width="1" height="3" fill="#000"/>
<rect x="386" y="386" width="1" height="3" fill="#000"/>
<rect x="387" y="385" width="1" height="3" fill="#000"/>
<text x="398.2" y="394.0" font-size="14" fill="#000000" textLength="72.8" lengthAdjust="spacingAndGlyphs" stroke="#d4d0c8" stroke-width="0.22">По статусу</text>
<rect x="377" y="408" width="100" height="22" fill="#ffffff"/>
<rect x="377" y="408" width="99" height="1" fill="#808080"/>
<rect x="377" y="408" width="1" height="21" fill="#808080"/>
<rect x="377" y="429" width="100" height="1" fill="#ffffff"/>
<rect x="476" y="408" width="1" height="22" fill="#ffffff"/>
<rect x="378" y="409" width="97" height="1" fill="#404040"/>
<rect x="378" y="409" width="1" height="19" fill="#404040"/>
<rect x="378" y="428" width="98" height="1" fill="#d4d0c8"/>
<rect x="475" y="409" width="1" height="20" fill="#d4d0c8"/>
<rect x="456" y="410" width="19" height="18" fill="#d4d0c8"/>
<rect x="456" y="410" width="18" height="1" fill="#d4d0c8"/>
<rect x="456" y="410" width="1" height="17" fill="#d4d0c8"/>
<rect x="456" y="427" width="19" height="1" fill="#404040"/>
<rect x="474" y="410" width="1" height="18" fill="#404040"/>
<rect x="457" y="411" width="16" height="1" fill="#ffffff"/>
<rect x="457" y="411" width="1" height="15" fill="#ffffff"/>
<rect x="457" y="426" width="17" height="1" fill="#808080"/>
<rect x="473" y="411" width="1" height="16" fill="#808080"/>
<rect x="460" y="416" width="9" height="1" fill="#000"/>
<rect x="461" y="417" width="7" height="1" fill="#000"/>
<rect x="462" y="418" width="5" height="1" fill="#000"/>
<rect x="463" y="419" width="3" height="1" fill="#000"/>
<rect x="464" y="420" width="1" height="1" fill="#000"/>
<rect x="495" y="381" width="16" height="16" fill="#ffffff"/>
<rect x="495" y="381" width="15" height="1" fill="#808080"/>
<rect x="495" y="381" width="1" height="15" fill="#808080"/>
<rect x="495" y="396" width="16" height="1" fill="#ffffff"/>
<rect x="510" y="381" width="1" height="16" fill="#ffffff"/>
<rect x="496" y="382" width="13" height="1" fill="#404040"/>
<rect x="496" y="382" width="1" height="13" fill="#404040"/>
<rect x="496" y="395" width="14" height="1" fill="#d4d0c8"/>
<rect x="509" y="382" width="1" height="14" fill="#d4d0c8"/>
<rect x="499" y="387" width="1" height="3" fill="#000"/>
<rect x="500" y="388" width="1" height="3" fill="#000"/>
<rect x="501" y="389" width="1" height="3" fill="#000"/>
<rect x="502" y="388" width="1" height="3" fill="#000"/>
<rect x="503" y="387" width="1" height="3" fill="#000"/>
<rect x="504" y="386" width="1" height="3" fill="#000"/>
<rect x="505" y="385" width="1" height="3" fill="#000"/>
<text x="515.2" y="394.0" font-size="14" fill="#000000" textLength="108.3" lengthAdjust="spacingAndGlyphs" stroke="#d4d0c8" stroke-width="0.22">Выбрать фильтр</text>
<rect x="495" y="408" width="149" height="22" fill="#ffffff"/>
<rect x="495" y="408" width="148" height="1" fill="#808080"/>
<rect x="495" y="408" width="1" height="21" fill="#808080"/>
<rect x="495" y="429" width="149" height="1" fill="#ffffff"/>
<rect x="643" y="408" width="1" height="22" fill="#ffffff"/>
<rect x="496" y="409" width="146" height="1" fill="#404040"/>
<rect x="496" y="409" width="1" height="19" fill="#404040"/>
<rect x="496" y="428" width="147" height="1" fill="#d4d0c8"/>
<rect x="642" y="409" width="1" height="20" fill="#d4d0c8"/>
<rect x="623" y="410" width="19" height="18" fill="#d4d0c8"/>
<rect x="623" y="410" width="18" height="1" fill="#d4d0c8"/>
<rect x="623" y="410" width="1" height="17" fill="#d4d0c8"/>
<rect x="623" y="427" width="19" height="1" fill="#404040"/>
<rect x="641" y="410" width="1" height="18" fill="#404040"/>
<rect x="624" y="411" width="16" height="1" fill="#ffffff"/>
<rect x="624" y="411" width="1" height="15" fill="#ffffff"/>
<rect x="624" y="426" width="17" height="1" fill="#808080"/>
<rect x="640" y="411" width="1" height="16" fill="#808080"/>
<rect x="627" y="416" width="9" height="1" fill="#000"/>
<rect x="628" y="417" width="7" height="1" fill="#000"/>
<rect x="629" y="418" width="5" height="1" fill="#000"/>
<rect x="630" y="419" width="3" height="1" fill="#000"/>
<rect x="631" y="420" width="1" height="1" fill="#000"/>
<rect x="498" y="412" width="1" height="15" fill="#000"/>
<rect x="495" y="439" width="148" height="21" fill="#ffffff"/>
<rect x="495" y="439" width="147" height="1" fill="#808080"/>
<rect x="495" y="439" width="1" height="20" fill="#808080"/>
<rect x="495" y="459" width="148" height="1" fill="#ffffff"/>
<rect x="642" y="439" width="1" height="21" fill="#ffffff"/>
<rect x="496" y="440" width="145" height="1" fill="#404040"/>
<rect x="496" y="440" width="1" height="18" fill="#404040"/>
<rect x="496" y="458" width="146" height="1" fill="#d4d0c8"/>
<rect x="641" y="440" width="1" height="19" fill="#d4d0c8"/>
<rect x="663" y="381" width="16" height="16" fill="#ffffff"/>
<rect x="663" y="381" width="15" height="1" fill="#808080"/>
<rect x="663" y="381" width="1" height="15" fill="#808080"/>
<rect x="663" y="396" width="16" height="1" fill="#ffffff"/>
<rect x="678" y="381" width="1" height="16" fill="#ffffff"/>
<rect x="664" y="382" width="13" height="1" fill="#404040"/>
<rect x="664" y="382" width="1" height="13" fill="#404040"/>
<rect x="664" y="395" width="14" height="1" fill="#d4d0c8"/>
<rect x="677" y="382" width="1" height="14" fill="#d4d0c8"/>
<rect x="667" y="387" width="1" height="3" fill="#000"/>
<rect x="668" y="388" width="1" height="3" fill="#000"/>
<rect x="669" y="389" width="1" height="3" fill="#000"/>
<rect x="670" y="388" width="1" height="3" fill="#000"/>
<rect x="671" y="387" width="1" height="3" fill="#000"/>
<rect x="672" y="386" width="1" height="3" fill="#000"/>
<rect x="673" y="385" width="1" height="3" fill="#000"/>
<text x="684.2" y="394.0" font-size="14" fill="#000000" textLength="51.8" lengthAdjust="spacingAndGlyphs" stroke="#d4d0c8" stroke-width="0.22">По дате</text>
<rect x="663" y="408" width="187" height="22" fill="#ffffff"/>
<rect x="663" y="408" width="186" height="1" fill="#808080"/>
<rect x="663" y="408" width="1" height="21" fill="#808080"/>
<rect x="663" y="429" width="187" height="1" fill="#ffffff"/>
<rect x="849" y="408" width="1" height="22" fill="#ffffff"/>
<rect x="664" y="409" width="184" height="1" fill="#404040"/>
<rect x="664" y="409" width="1" height="19" fill="#404040"/>
<rect x="664" y="428" width="185" height="1" fill="#d4d0c8"/>
<rect x="848" y="409" width="1" height="20" fill="#d4d0c8"/>
<rect x="829" y="410" width="19" height="18" fill="#d4d0c8"/>
<rect x="829" y="410" width="18" height="1" fill="#d4d0c8"/>
<rect x="829" y="410" width="1" height="17" fill="#d4d0c8"/>
<rect x="829" y="427" width="19" height="1" fill="#404040"/>
<rect x="847" y="410" width="1" height="18" fill="#404040"/>
<rect x="830" y="411" width="16" height="1" fill="#ffffff"/>
<rect x="830" y="411" width="1" height="15" fill="#ffffff"/>
<rect x="830" y="426" width="17" height="1" fill="#808080"/>
<rect x="846" y="411" width="1" height="16" fill="#808080"/>
<rect x="833" y="416" width="9" height="1" fill="#000"/>
<rect x="834" y="417" width="7" height="1" fill="#000"/>
<rect x="835" y="418" width="5" height="1" fill="#000"/>
<rect x="836" y="419" width="3" height="1" fill="#000"/>
<rect x="837" y="420" width="1" height="1" fill="#000"/>
<text x="666.2" y="424.0" font-size="14" fill="#000000" textLength="155.3" lengthAdjust="spacingAndGlyphs" stroke="#ffffff" stroke-width="0.22">следующего обслуживн</text>
<rect x="663" y="438" width="89" height="22" fill="#ffffff"/>
<rect x="663" y="438" width="88" height="1" fill="#808080"/>
<rect x="663" y="438" width="1" height="21" fill="#808080"/>
<rect x="663" y="459" width="89" height="1" fill="#ffffff"/>
<rect x="751" y="438" width="1" height="22" fill="#ffffff"/>
<rect x="664" y="439" width="86" height="1" fill="#404040"/>
<rect x="664" y="439" width="1" height="19" fill="#404040"/>
<rect x="664" y="458" width="87" height="1" fill="#d4d0c8"/>
<rect x="750" y="439" width="1" height="20" fill="#d4d0c8"/>
<rect x="731" y="440" width="19" height="18" fill="#d4d0c8"/>
<rect x="731" y="440" width="18" height="1" fill="#d4d0c8"/>
<rect x="731" y="440" width="1" height="17" fill="#d4d0c8"/>
<rect x="731" y="457" width="19" height="1" fill="#404040"/>
<rect x="749" y="440" width="1" height="18" fill="#404040"/>
<rect x="732" y="441" width="16" height="1" fill="#ffffff"/>
<rect x="732" y="441" width="1" height="15" fill="#ffffff"/>
<rect x="732" y="456" width="17" height="1" fill="#808080"/>
<rect x="748" y="441" width="1" height="16" fill="#808080"/>
<rect x="735" y="446" width="9" height="1" fill="#000"/>
<rect x="736" y="447" width="7" height="1" fill="#000"/>
<rect x="737" y="448" width="5" height="1" fill="#000"/>
<rect x="738" y="449" width="3" height="1" fill="#000"/>
<rect x="739" y="450" width="1" height="1" fill="#000"/>
<text x="666.7" y="454.0" font-size="14" fill="#000000" textLength="62.3" lengthAdjust="spacingAndGlyphs" stroke="#ffffff" stroke-width="0.22">01.10.2010</text>
<rect x="761" y="438" width="89" height="22" fill="#ffffff"/>
<rect x="761" y="438" width="88" height="1" fill="#808080"/>
<rect x="761" y="438" width="1" height="21" fill="#808080"/>
<rect x="761" y="459" width="89" height="1" fill="#ffffff"/>
<rect x="849" y="438" width="1" height="22" fill="#ffffff"/>
<rect x="762" y="439" width="86" height="1" fill="#404040"/>
<rect x="762" y="439" width="1" height="19" fill="#404040"/>
<rect x="762" y="458" width="87" height="1" fill="#d4d0c8"/>
<rect x="848" y="439" width="1" height="20" fill="#d4d0c8"/>
<rect x="829" y="440" width="19" height="18" fill="#d4d0c8"/>
<rect x="829" y="440" width="18" height="1" fill="#d4d0c8"/>
<rect x="829" y="440" width="1" height="17" fill="#d4d0c8"/>
<rect x="829" y="457" width="19" height="1" fill="#404040"/>
<rect x="847" y="440" width="1" height="18" fill="#404040"/>
<rect x="830" y="441" width="16" height="1" fill="#ffffff"/>
<rect x="830" y="441" width="1" height="15" fill="#ffffff"/>
<rect x="830" y="456" width="17" height="1" fill="#808080"/>
<rect x="846" y="441" width="1" height="16" fill="#808080"/>
<rect x="833" y="446" width="9" height="1" fill="#000"/>
<rect x="834" y="447" width="7" height="1" fill="#000"/>
<rect x="835" y="448" width="5" height="1" fill="#000"/>
<rect x="836" y="449" width="3" height="1" fill="#000"/>
<rect x="837" y="450" width="1" height="1" fill="#000"/>
<text x="764.7" y="454.0" font-size="14" fill="#000000" textLength="62.3" lengthAdjust="spacingAndGlyphs" stroke="#ffffff" stroke-width="0.22">29.10.2010</text>
<rect x="877" y="383" width="16" height="16" fill="#ffffff"/>
<rect x="877" y="383" width="15" height="1" fill="#808080"/>
<rect x="877" y="383" width="1" height="15" fill="#808080"/>
<rect x="877" y="398" width="16" height="1" fill="#ffffff"/>
<rect x="892" y="383" width="1" height="16" fill="#ffffff"/>
<rect x="878" y="384" width="13" height="1" fill="#404040"/>
<rect x="878" y="384" width="1" height="13" fill="#404040"/>
<rect x="878" y="397" width="14" height="1" fill="#d4d0c8"/>
<rect x="891" y="384" width="1" height="14" fill="#d4d0c8"/>
<text x="898.2" y="396.5" font-size="14" fill="#000000" textLength="65.3" lengthAdjust="spacingAndGlyphs" stroke="#d4d0c8" stroke-width="0.22">Содержит</text>
<rect x="870" y="408" width="92" height="32" fill="#000"/>
<rect x="871" y="409" width="90" height="30" fill="#d4d0c8"/>
<rect x="871" y="409" width="89" height="1" fill="#ffffff"/>
<rect x="871" y="409" width="1" height="29" fill="#ffffff"/>
<rect x="871" y="438" width="90" height="1" fill="#404040"/>
<rect x="960" y="409" width="1" height="30" fill="#404040"/>
<rect x="872" y="410" width="87" height="1" fill="#d4d0c8"/>
<rect x="872" y="410" width="1" height="27" fill="#d4d0c8"/>
<rect x="872" y="437" width="88" height="1" fill="#808080"/>
<rect x="959" y="410" width="1" height="28" fill="#808080"/>
<text x="894.7" y="428.0" font-size="14" fill="#000000" textLength="41.8" lengthAdjust="spacingAndGlyphs" stroke="#d4d0c8" stroke-width="0.22">Найти</text>
<rect x="24" y="478" width="941" height="226" fill="#ffffff"/>
<rect x="24" y="478" width="940" height="1" fill="#808080"/>
<rect x="24" y="478" width="1" height="225" fill="#808080"/>
<rect x="24" y="703" width="941" height="1" fill="#ffffff"/>
<rect x="964" y="478" width="1" height="226" fill="#ffffff"/>
<rect x="25" y="479" width="938" height="1" fill="#404040"/>
<rect x="25" y="479" width="1" height="223" fill="#404040"/>
<rect x="25" y="702" width="939" height="1" fill="#d4d0c8"/>
<rect x="963" y="479" width="1" height="224" fill="#d4d0c8"/>
<clipPath id="cg"><rect x="26" y="480" width="918" height="203"/></clipPath>
<rect x="26" y="480" width="10" height="20" fill="#d4d0c8"/>
<rect x="26" y="480" width="9" height="1" fill="#ffffff"/>
<rect x="26" y="480" width="1" height="19" fill="#ffffff"/>
<rect x="26" y="499" width="10" height="1" fill="#000"/>
<rect x="35" y="480" width="1" height="20" fill="#000"/>
<rect x="27" y="498" width="8" height="1" fill="#808080"/>
<rect x="34" y="481" width="1" height="18" fill="#808080"/>
<g clip-path="url(#cg)">
<rect x="36" y="480" width="88" height="20" fill="#d4d0c8"/>
<rect x="36" y="480" width="87" height="1" fill="#ffffff"/>
<rect x="36" y="480" width="1" height="19" fill="#ffffff"/>
<rect x="36" y="499" width="88" height="1" fill="#000"/>
<rect x="123" y="480" width="1" height="20" fill="#000"/>
<rect x="37" y="498" width="86" height="1" fill="#808080"/>
<rect x="122" y="481" width="1" height="18" fill="#808080"/>
</g>
<clipPath id="h0"><rect x="36" y="480" width="86" height="20"/></clipPath>
<text x="38.7" y="494.0" font-size="14" fill="#000000" textLength="83.3" lengthAdjust="spacingAndGlyphs" stroke="#d4d0c8" stroke-width="0.22" clip-path="url(#h0)">Код прибора</text>
<g clip-path="url(#cg)">
<rect x="124" y="480" width="130" height="20" fill="#d4d0c8"/>
<rect x="124" y="480" width="129" height="1" fill="#ffffff"/>
<rect x="124" y="480" width="1" height="19" fill="#ffffff"/>
<rect x="124" y="499" width="130" height="1" fill="#000"/>
<rect x="253" y="480" width="1" height="20" fill="#000"/>
<rect x="125" y="498" width="128" height="1" fill="#808080"/>
<rect x="252" y="481" width="1" height="18" fill="#808080"/>
</g>
<clipPath id="h1"><rect x="124" y="480" width="128" height="20"/></clipPath>
<text x="126.7" y="494.0" font-size="14" fill="#000000" textLength="121.8" lengthAdjust="spacingAndGlyphs" stroke="#d4d0c8" stroke-width="0.22" clip-path="url(#h1)">Наименование СИ</text>
<g clip-path="url(#cg)">
<rect x="254" y="480" width="95" height="20" fill="#d4d0c8"/>
<rect x="254" y="480" width="94" height="1" fill="#ffffff"/>
<rect x="254" y="480" width="1" height="19" fill="#ffffff"/>
<rect x="254" y="499" width="95" height="1" fill="#000"/>
<rect x="348" y="480" width="1" height="20" fill="#000"/>
<rect x="255" y="498" width="93" height="1" fill="#808080"/>
<rect x="347" y="481" width="1" height="18" fill="#808080"/>
</g>
<clipPath id="h2"><rect x="254" y="480" width="93" height="20"/></clipPath>
<text x="257.2" y="494.0" font-size="14" fill="#000000" textLength="85.3" lengthAdjust="spacingAndGlyphs" stroke="#d4d0c8" stroke-width="0.22" clip-path="url(#h2)">Тип прибора</text>
<g clip-path="url(#cg)">
<rect x="349" y="480" width="109" height="20" fill="#d4d0c8"/>
<rect x="349" y="480" width="108" height="1" fill="#ffffff"/>
<rect x="349" y="480" width="1" height="19" fill="#ffffff"/>
<rect x="349" y="499" width="109" height="1" fill="#000"/>
<rect x="457" y="480" width="1" height="20" fill="#000"/>
<rect x="350" y="498" width="107" height="1" fill="#808080"/>
<rect x="456" y="481" width="1" height="18" fill="#808080"/>
</g>
<clipPath id="h3"><rect x="349" y="480" width="107" height="20"/></clipPath>
<text x="351.7" y="494.0" font-size="14" fill="#000000" textLength="101.5" lengthAdjust="spacingAndGlyphs" stroke="#d4d0c8" stroke-width="0.22" clip-path="url(#h3)">Номер прибора</text>
<g clip-path="url(#cg)">
<rect x="458" y="480" width="114" height="20" fill="#d4d0c8"/>
<rect x="458" y="480" width="113" height="1" fill="#ffffff"/>
<rect x="458" y="480" width="1" height="19" fill="#ffffff"/>
<rect x="458" y="499" width="114" height="1" fill="#000"/>
<rect x="571" y="480" width="1" height="20" fill="#000"/>
<rect x="459" y="498" width="112" height="1" fill="#808080"/>
<rect x="570" y="481" width="1" height="18" fill="#808080"/>
</g>
<clipPath id="h4"><rect x="458" y="480" width="112" height="20"/></clipPath>
<text x="460.7" y="494.0" font-size="14" fill="#000000" textLength="106.2" lengthAdjust="spacingAndGlyphs" stroke="#d4d0c8" stroke-width="0.22" clip-path="url(#h4)">Подразделение</text>
<g clip-path="url(#cg)">
<rect x="572" y="480" width="128" height="20" fill="#d4d0c8"/>
<rect x="572" y="480" width="127" height="1" fill="#ffffff"/>
<rect x="572" y="480" width="1" height="19" fill="#ffffff"/>
<rect x="572" y="499" width="128" height="1" fill="#000"/>
<rect x="699" y="480" width="1" height="20" fill="#000"/>
<rect x="573" y="498" width="126" height="1" fill="#808080"/>
<rect x="698" y="481" width="1" height="18" fill="#808080"/>
</g>
<clipPath id="h5"><rect x="572" y="480" width="126" height="20"/></clipPath>
<text x="575.2" y="494.0" font-size="14" fill="#000000" textLength="54.8" lengthAdjust="spacingAndGlyphs" stroke="#d4d0c8" stroke-width="0.22" clip-path="url(#h5)">№ счета</text>
<g clip-path="url(#cg)">
<rect x="700" y="480" width="70" height="20" fill="#d4d0c8"/>
<rect x="700" y="480" width="69" height="1" fill="#ffffff"/>
<rect x="700" y="480" width="1" height="19" fill="#ffffff"/>
<rect x="700" y="499" width="70" height="1" fill="#000"/>
<rect x="769" y="480" width="1" height="20" fill="#000"/>
<rect x="701" y="498" width="68" height="1" fill="#808080"/>
<rect x="768" y="481" width="1" height="18" fill="#808080"/>
</g>
<clipPath id="h6"><rect x="700" y="480" width="68" height="20"/></clipPath>
<text x="702.7" y="494.0" font-size="14" fill="#000000" textLength="32.8" lengthAdjust="spacingAndGlyphs" stroke="#d4d0c8" stroke-width="0.22" clip-path="url(#h6)">Дата</text>
<g clip-path="url(#cg)">
<rect x="770" y="480" width="123" height="20" fill="#d4d0c8"/>
<rect x="770" y="480" width="122" height="1" fill="#ffffff"/>
<rect x="770" y="480" width="1" height="19" fill="#ffffff"/>
<rect x="770" y="499" width="123" height="1" fill="#000"/>
<rect x="892" y="480" width="1" height="20" fill="#000"/>
<rect x="771" y="498" width="121" height="1" fill="#808080"/>
<rect x="891" y="481" width="1" height="18" fill="#808080"/>
</g>
<clipPath id="h7"><rect x="770" y="480" width="121" height="20"/></clipPath>
<text x="773.2" y="494.0" font-size="14" fill="#000000" textLength="115.3" lengthAdjust="spacingAndGlyphs" stroke="#d4d0c8" stroke-width="0.22" clip-path="url(#h7)">№ свидетельства</text>
<g clip-path="url(#cg)">
<rect x="893" y="480" width="111" height="20" fill="#d4d0c8"/>
<rect x="893" y="480" width="110" height="1" fill="#ffffff"/>
<rect x="893" y="480" width="1" height="19" fill="#ffffff"/>
<rect x="893" y="499" width="111" height="1" fill="#000"/>
<rect x="1003" y="480" width="1" height="20" fill="#000"/>
<rect x="894" y="498" width="109" height="1" fill="#808080"/>
<rect x="1002" y="481" width="1" height="18" fill="#808080"/>
</g>
<clipPath id="h8"><rect x="893" y="480" width="49" height="20"/></clipPath>
<text x="895.7" y="494.0" font-size="14" fill="#000000" textLength="110.8" lengthAdjust="spacingAndGlyphs" stroke="#d4d0c8" stroke-width="0.22" clip-path="url(#h8)">Дата следующей</text>
<rect x="26" y="500" width="10" height="21" fill="#d4d0c8"/>
<rect x="26" y="500" width="9" height="1" fill="#ffffff"/>
<rect x="26" y="500" width="1" height="20" fill="#ffffff"/>
<rect x="26" y="520" width="10" height="1" fill="#000"/>
<rect x="35" y="500" width="1" height="21" fill="#000"/>
<rect x="27" y="519" width="8" height="1" fill="#808080"/>
<rect x="34" y="501" width="1" height="19" fill="#808080"/>
<rect x="36" y="500" width="908" height="21" fill="#0a246a"/>
<rect x="27" y="504" width="1" height="11" fill="#000"/>
<rect x="28" y="505" width="1" height="9" fill="#000"/>
<rect x="29" y="506" width="1" height="7" fill="#000"/>
<rect x="30" y="507" width="1" height="5" fill="#000"/>
<rect x="31" y="508" width="1" height="3" fill="#000"/>
<rect x="32" y="509" width="1" height="1" fill="#000"/>
<rect x="123" y="500" width="1" height="21" fill="#6480c8"/>
<clipPath id="c0_0"><rect x="36" y="500" width="87" height="21"/></clipPath>
<text x="38.7" y="514.5" font-size="14" fill="#fff" textLength="51.3" lengthAdjust="spacingAndGlyphs" stroke="#0a246a" stroke-width="0.22" clip-path="url(#c0_0)">27О0650</text>
<rect x="253" y="500" width="1" height="21" fill="#6480c8"/>
<clipPath id="c0_1"><rect x="124" y="500" width="129" height="21"/></clipPath>
<text x="126.7" y="514.5" font-size="14" fill="#fff" textLength="143.8" lengthAdjust="spacingAndGlyphs" stroke="#0a246a" stroke-width="0.22" clip-path="url(#c0_1)">Контрольный образец</text>
<rect x="348" y="500" width="1" height="21" fill="#6480c8"/>
<clipPath id="c0_2"><rect x="254" y="500" width="94" height="21"/></clipPath>
<text x="257.2" y="514.5" font-size="14" fill="#fff" textLength="18.8" lengthAdjust="spacingAndGlyphs" stroke="#0a246a" stroke-width="0.22" clip-path="url(#c0_2)">КД</text>
<rect x="457" y="500" width="1" height="21" fill="#6480c8"/>
<clipPath id="c0_3"><rect x="349" y="500" width="108" height="21"/></clipPath>
<text x="351.7" y="514.5" font-size="14" fill="#fff" textLength="7.4" lengthAdjust="spacingAndGlyphs" stroke="#0a246a" stroke-width="0.22" clip-path="url(#c0_3)">6</text>
<rect x="571" y="500" width="1" height="21" fill="#6480c8"/>
<clipPath id="c0_4"><rect x="458" y="500" width="113" height="21"/></clipPath>
<text x="460.7" y="514.5" font-size="14" fill="#fff" textLength="39.8" lengthAdjust="spacingAndGlyphs" stroke="#0a246a" stroke-width="0.22" clip-path="url(#c0_4)">СМИС</text>
<rect x="699" y="500" width="1" height="21" fill="#6480c8"/>
<rect x="769" y="500" width="1" height="21" fill="#6480c8"/>
<clipPath id="c0_6"><rect x="700" y="500" width="69" height="21"/></clipPath>
<text x="702.7" y="514.5" font-size="14" fill="#fff" textLength="62.8" lengthAdjust="spacingAndGlyphs" stroke="#0a246a" stroke-width="0.22" clip-path="url(#c0_6)">08.12.2010</text>
<rect x="892" y="500" width="1" height="21" fill="#6480c8"/>
<rect x="26" y="521" width="10" height="21" fill="#d4d0c8"/>
<rect x="26" y="521" width="9" height="1" fill="#ffffff"/>
<rect x="26" y="521" width="1" height="20" fill="#ffffff"/>
<rect x="26" y="541" width="10" height="1" fill="#000"/>
<rect x="35" y="521" width="1" height="21" fill="#000"/>
<rect x="27" y="540" width="8" height="1" fill="#808080"/>
<rect x="34" y="522" width="1" height="19" fill="#808080"/>
<rect x="36" y="541" width="908" height="1" fill="#c0c0c0"/>
<rect x="123" y="521" width="1" height="21" fill="#c0c0c0"/>
<clipPath id="c1_0"><rect x="36" y="521" width="87" height="21"/></clipPath>
<text x="38.7" y="535.5" font-size="14" fill="#000000" textLength="51.3" lengthAdjust="spacingAndGlyphs" stroke="#ffffff" stroke-width="0.22" clip-path="url(#c1_0)">30М0580</text>
<rect x="253" y="521" width="1" height="21" fill="#c0c0c0"/>
<clipPath id="c1_1"><rect x="124" y="521" width="129" height="21"/></clipPath>
<text x="126.7" y="535.5" font-size="14" fill="#000000" textLength="67.8" lengthAdjust="spacingAndGlyphs" stroke="#ffffff" stroke-width="0.22" clip-path="url(#c1_1)">Манометр</text>
<rect x="348" y="521" width="1" height="21" fill="#c0c0c0"/>
<clipPath id="c1_2"><rect x="254" y="521" width="94" height="21"/></clipPath>
<text x="257.2" y="535.5" font-size="14" fill="#000000" textLength="57.8" lengthAdjust="spacingAndGlyphs" stroke="#ffffff" stroke-width="0.22" clip-path="url(#c1_2)">МТ-УХЛ3</text>
<rect x="457" y="521" width="1" height="21" fill="#c0c0c0"/>
<clipPath id="c1_3"><rect x="349" y="521" width="108" height="21"/></clipPath>
<text x="351.7" y="535.5" font-size="14" fill="#000000" textLength="7.4" lengthAdjust="spacingAndGlyphs" stroke="#ffffff" stroke-width="0.22" clip-path="url(#c1_3)">6</text>
<rect x="571" y="521" width="1" height="21" fill="#c0c0c0"/>
<clipPath id="c1_4"><rect x="458" y="521" width="113" height="21"/></clipPath>
<text x="460.7" y="535.5" font-size="14" fill="#000000" textLength="16.8" lengthAdjust="spacingAndGlyphs" stroke="#ffffff" stroke-width="0.22" clip-path="url(#c1_4)">ХС</text>
<rect x="699" y="521" width="1" height="21" fill="#c0c0c0"/>
<clipPath id="c1_5"><rect x="572" y="521" width="127" height="21"/></clipPath>
<text x="575.2" y="535.5" font-size="14" fill="#000000" textLength="117.8" lengthAdjust="spacingAndGlyphs" stroke="#ffffff" stroke-width="0.22" clip-path="url(#c1_5)">5022860 от 06.05.10</text>
<rect x="769" y="521" width="1" height="21" fill="#c0c0c0"/>
<clipPath id="c1_6"><rect x="700" y="521" width="69" height="21"/></clipPath>
<text x="702.7" y="535.5" font-size="14" fill="#000000" textLength="62.8" lengthAdjust="spacingAndGlyphs" stroke="#ffffff" stroke-width="0.22" clip-path="url(#c1_6)">13.06.2010</text>
<rect x="892" y="521" width="1" height="21" fill="#c0c0c0"/>
<clipPath id="c1_7"><rect x="770" y="521" width="122" height="21"/></clipPath>
<text x="773.2" y="535.5" font-size="14" fill="#000000" textLength="127.3" lengthAdjust="spacingAndGlyphs" stroke="#ffffff" stroke-width="0.22" clip-path="url(#c1_7)">клеймо до II кв. 2011</text>
<rect x="26" y="542" width="10" height="21" fill="#d4d0c8"/>
<rect x="26" y="542" width="9" height="1" fill="#ffffff"/>
<rect x="26" y="542" width="1" height="20" fill="#ffffff"/>
<rect x="26" y="562" width="10" height="1" fill="#000"/>
<rect x="35" y="542" width="1" height="21" fill="#000"/>
<rect x="27" y="561" width="8" height="1" fill="#808080"/>
<rect x="34" y="543" width="1" height="19" fill="#808080"/>
<rect x="36" y="562" width="908" height="1" fill="#c0c0c0"/>
<rect x="123" y="542" width="1" height="21" fill="#c0c0c0"/>
<clipPath id="c2_0"><rect x="36" y="542" width="87" height="21"/></clipPath>
<text x="38.7" y="556.5" font-size="14" fill="#000000" textLength="51.3" lengthAdjust="spacingAndGlyphs" stroke="#ffffff" stroke-width="0.22" clip-path="url(#c2_0)">31П6360</text>
<rect x="253" y="542" width="1" height="21" fill="#c0c0c0"/>
<clipPath id="c2_1"><rect x="124" y="542" width="129" height="21"/></clipPath>
<text x="126.7" y="556.5" font-size="14" fill="#000000" textLength="170.8" lengthAdjust="spacingAndGlyphs" stroke="#ffffff" stroke-width="0.22" clip-path="url(#c2_1)">Прибор для определения</text>
<rect x="348" y="542" width="1" height="21" fill="#c0c0c0"/>
<clipPath id="c2_2"><rect x="254" y="542" width="94" height="21"/></clipPath>
<text x="257.2" y="556.5" font-size="14" fill="#000000" textLength="28.8" lengthAdjust="spacingAndGlyphs" stroke="#ffffff" stroke-width="0.22" clip-path="url(#c2_2)">ТВ-1</text>
<rect x="457" y="542" width="1" height="21" fill="#c0c0c0"/>
<clipPath id="c2_3"><rect x="349" y="542" width="108" height="21"/></clipPath>
<text x="351.7" y="556.5" font-size="14" fill="#000000" textLength="7.4" lengthAdjust="spacingAndGlyphs" stroke="#ffffff" stroke-width="0.22" clip-path="url(#c2_3)">6</text>
<rect x="571" y="542" width="1" height="21" fill="#c0c0c0"/>
<clipPath id="c2_4"><rect x="458" y="542" width="113" height="21"/></clipPath>
<text x="460.7" y="556.5" font-size="14" fill="#000000" textLength="16.8" lengthAdjust="spacingAndGlyphs" stroke="#ffffff" stroke-width="0.22" clip-path="url(#c2_4)">ХС</text>
<rect x="699" y="542" width="1" height="21" fill="#c0c0c0"/>
<clipPath id="c2_5"><rect x="572" y="542" width="127" height="21"/></clipPath>
<text x="575.2" y="556.5" font-size="14" fill="#000000" textLength="111.3" lengthAdjust="spacingAndGlyphs" stroke="#ffffff" stroke-width="0.22" clip-path="url(#c2_5)">5022862 от 6.05.10</text>
<rect x="769" y="542" width="1" height="21" fill="#c0c0c0"/>
<rect x="892" y="542" width="1" height="21" fill="#c0c0c0"/>
<clipPath id="c2_7"><rect x="770" y="542" width="122" height="21"/></clipPath>
<text x="773.2" y="556.5" font-size="14" fill="#000000" textLength="125.3" lengthAdjust="spacingAndGlyphs" stroke="#ffffff" stroke-width="0.22" clip-path="url(#c2_7)">св - во № 5026714 до</text>
<rect x="944" y="480" width="19" height="203" fill="url(#dith)"/>
<rect x="944" y="480" width="19" height="19" fill="#d4d0c8"/>
<rect x="944" y="480" width="18" height="1" fill="#d4d0c8"/>
<rect x="944" y="480" width="1" height="18" fill="#d4d0c8"/>
<rect x="944" y="498" width="19" height="1" fill="#404040"/>
<rect x="962" y="480" width="1" height="19" fill="#404040"/>
<rect x="945" y="481" width="16" height="1" fill="#ffffff"/>
<rect x="945" y="481" width="1" height="16" fill="#ffffff"/>
<rect x="945" y="497" width="17" height="1" fill="#808080"/>
<rect x="961" y="481" width="1" height="17" fill="#808080"/>
<rect x="952" y="486" width="1" height="1" fill="#000"/>
<rect x="951" y="487" width="3" height="1" fill="#000"/>
<rect x="950" y="488" width="5" height="1" fill="#000"/>
<rect x="949" y="489" width="7" height="1" fill="#000"/>
<rect x="948" y="490" width="9" height="1" fill="#000"/>
<rect x="944" y="499" width="19" height="97" fill="#d4d0c8"/>
<rect x="944" y="499" width="18" height="1" fill="#d4d0c8"/>
<rect x="944" y="499" width="1" height="96" fill="#d4d0c8"/>
<rect x="944" y="595" width="19" height="1" fill="#404040"/>
<rect x="962" y="499" width="1" height="97" fill="#404040"/>
<rect x="945" y="500" width="16" height="1" fill="#ffffff"/>
<rect x="945" y="500" width="1" height="94" fill="#ffffff"/>
<rect x="945" y="594" width="17" height="1" fill="#808080"/>
<rect x="961" y="500" width="1" height="95" fill="#808080"/>
<rect x="944" y="664" width="19" height="19" fill="#d4d0c8"/>
<rect x="944" y="664" width="18" height="1" fill="#d4d0c8"/>
<rect x="944" y="664" width="1" height="18" fill="#d4d0c8"/>
<rect x="944" y="682" width="19" height="1" fill="#404040"/>
<rect x="962" y="664" width="1" height="19" fill="#404040"/>
<rect x="945" y="665" width="16" height="1" fill="#ffffff"/>
<rect x="945" y="665" width="1" height="16" fill="#ffffff"/>
<rect x="945" y="681" width="17" height="1" fill="#808080"/>
<rect x="961" y="665" width="1" height="17" fill="#808080"/>
<rect x="948" y="671" width="9" height="1" fill="#000"/>
<rect x="949" y="672" width="7" height="1" fill="#000"/>
<rect x="950" y="673" width="5" height="1" fill="#000"/>
<rect x="951" y="674" width="3" height="1" fill="#000"/>
<rect x="952" y="675" width="1" height="1" fill="#000"/>
<rect x="26" y="683" width="918" height="19" fill="url(#dith)"/>
<rect x="26" y="683" width="19" height="19" fill="#d4d0c8"/>
<rect x="26" y="683" width="18" height="1" fill="#d4d0c8"/>
<rect x="26" y="683" width="1" height="18" fill="#d4d0c8"/>
<rect x="26" y="701" width="19" height="1" fill="#404040"/>
<rect x="44" y="683" width="1" height="19" fill="#404040"/>
<rect x="27" y="684" width="16" height="1" fill="#ffffff"/>
<rect x="27" y="684" width="1" height="16" fill="#ffffff"/>
<rect x="27" y="700" width="17" height="1" fill="#808080"/>
<rect x="43" y="684" width="1" height="17" fill="#808080"/>
<rect x="32" y="691" width="1" height="1" fill="#000"/>
<rect x="33" y="690" width="1" height="3" fill="#000"/>
<rect x="34" y="689" width="1" height="5" fill="#000"/>
<rect x="35" y="688" width="1" height="7" fill="#000"/>
<rect x="36" y="687" width="1" height="9" fill="#000"/>
<rect x="45" y="683" width="20" height="19" fill="#d4d0c8"/>
<rect x="45" y="683" width="19" height="1" fill="#d4d0c8"/>
<rect x="45" y="683" width="1" height="18" fill="#d4d0c8"/>
<rect x="45" y="701" width="20" height="1" fill="#404040"/>
<rect x="64" y="683" width="1" height="19" fill="#404040"/>
<rect x="46" y="684" width="17" height="1" fill="#ffffff"/>
<rect x="46" y="684" width="1" height="16" fill="#ffffff"/>
<rect x="46" y="700" width="18" height="1" fill="#808080"/>
<rect x="63" y="684" width="1" height="17" fill="#808080"/>
<rect x="925" y="683" width="19" height="19" fill="#d4d0c8"/>
<rect x="925" y="683" width="18" height="1" fill="#d4d0c8"/>
<rect x="925" y="683" width="1" height="18" fill="#d4d0c8"/>
<rect x="925" y="701" width="19" height="1" fill="#404040"/>
<rect x="943" y="683" width="1" height="19" fill="#404040"/>
<rect x="926" y="684" width="16" height="1" fill="#ffffff"/>
<rect x="926" y="684" width="1" height="16" fill="#ffffff"/>
<rect x="926" y="700" width="17" height="1" fill="#808080"/>
<rect x="942" y="684" width="1" height="17" fill="#808080"/>
<rect x="932" y="687" width="1" height="9" fill="#000"/>
<rect x="933" y="688" width="1" height="7" fill="#000"/>
<rect x="934" y="689" width="1" height="5" fill="#000"/>
<rect x="935" y="690" width="1" height="3" fill="#000"/>
<rect x="936" y="691" width="1" height="1" fill="#000"/>
<rect x="944" y="683" width="19" height="19" fill="#d4d0c8"/>
<text x="12.2" y="735.5" font-size="14" fill="#000000" textLength="124.3" lengthAdjust="spacingAndGlyphs" stroke="#d4d0c8" stroke-width="0.22">Найдено за 47 мкс.</text>
<text x="12.2" y="755.5" font-size="14" fill="#000000" textLength="65.8" lengthAdjust="spacingAndGlyphs" stroke="#d4d0c8" stroke-width="0.22">3 записей</text>
<rect x="219" y="723" width="110" height="31" fill="#d4d0c8"/>
<rect x="219" y="723" width="109" height="1" fill="#ffffff"/>
<rect x="219" y="723" width="1" height="30" fill="#ffffff"/>
<rect x="219" y="753" width="110" height="1" fill="#404040"/>
<rect x="328" y="723" width="1" height="31" fill="#404040"/>
<rect x="220" y="724" width="107" height="1" fill="#d4d0c8"/>
<rect x="220" y="724" width="1" height="28" fill="#d4d0c8"/>
<rect x="220" y="752" width="108" height="1" fill="#808080"/>
<rect x="327" y="724" width="1" height="29" fill="#808080"/>
<text x="242.2" y="743.0" font-size="14" fill="#000000" textLength="64.8" lengthAdjust="spacingAndGlyphs" stroke="#d4d0c8" stroke-width="0.22">Добавить</text>
<rect x="436" y="723" width="90" height="31" fill="#d4d0c8"/>
<rect x="436" y="723" width="89" height="1" fill="#ffffff"/>
<rect x="436" y="723" width="1" height="30" fill="#ffffff"/>
<rect x="436" y="753" width="90" height="1" fill="#404040"/>
<rect x="525" y="723" width="1" height="31" fill="#404040"/>
<rect x="437" y="724" width="87" height="1" fill="#d4d0c8"/>
<rect x="437" y="724" width="1" height="28" fill="#d4d0c8"/>
<rect x="437" y="752" width="88" height="1" fill="#808080"/>
<rect x="524" y="724" width="1" height="29" fill="#808080"/>
<text x="449.2" y="743.0" font-size="14" fill="#000000" textLength="63.8" lengthAdjust="spacingAndGlyphs" stroke="#d4d0c8" stroke-width="0.22">Карточка</text>
<rect x="535" y="723" width="82" height="31" fill="#d4d0c8"/>
<rect x="535" y="723" width="81" height="1" fill="#ffffff"/>
<rect x="535" y="723" width="1" height="30" fill="#ffffff"/>
<rect x="535" y="753" width="82" height="1" fill="#404040"/>
<rect x="616" y="723" width="1" height="31" fill="#404040"/>
<rect x="536" y="724" width="79" height="1" fill="#d4d0c8"/>
<rect x="536" y="724" width="1" height="28" fill="#d4d0c8"/>
<rect x="536" y="752" width="80" height="1" fill="#808080"/>
<rect x="615" y="724" width="1" height="29" fill="#808080"/>
<text x="551.2" y="743.0" font-size="14" fill="#000000" textLength="48.8" lengthAdjust="spacingAndGlyphs" stroke="#d4d0c8" stroke-width="0.22">Печать</text>
<rect x="623" y="723" width="82" height="31" fill="#d4d0c8"/>
<rect x="623" y="723" width="81" height="1" fill="#ffffff"/>
<rect x="623" y="723" width="1" height="30" fill="#ffffff"/>
<rect x="623" y="753" width="82" height="1" fill="#404040"/>
<rect x="704" y="723" width="1" height="31" fill="#404040"/>
<rect x="624" y="724" width="79" height="1" fill="#d4d0c8"/>
<rect x="624" y="724" width="1" height="28" fill="#d4d0c8"/>
<rect x="624" y="752" width="80" height="1" fill="#808080"/>
<rect x="703" y="724" width="1" height="29" fill="#808080"/>
<text x="636.2" y="743.0" font-size="14" fill="#000000" textLength="55.8" lengthAdjust="spacingAndGlyphs" stroke="#d4d0c8" stroke-width="0.22">Удалить</text>
<rect x="712" y="723" width="79" height="31" fill="#d4d0c8"/>
<rect x="712" y="723" width="78" height="1" fill="#ffffff"/>
<rect x="712" y="723" width="1" height="30" fill="#ffffff"/>
<rect x="712" y="753" width="79" height="1" fill="#404040"/>
<rect x="790" y="723" width="1" height="31" fill="#404040"/>
<rect x="713" y="724" width="76" height="1" fill="#d4d0c8"/>
<rect x="713" y="724" width="1" height="28" fill="#d4d0c8"/>
<rect x="713" y="752" width="77" height="1" fill="#808080"/>
<rect x="789" y="724" width="1" height="29" fill="#808080"/>
<text x="717.2" y="743.0" font-size="14" fill="#000000" textLength="68.8" lengthAdjust="spacingAndGlyphs" stroke="#d4d0c8" stroke-width="0.22">Сохранить</text>
<rect x="801" y="723" width="81" height="31" fill="#d4d0c8"/>
<rect x="801" y="723" width="80" height="1" fill="#ffffff"/>
<rect x="801" y="723" width="1" height="30" fill="#ffffff"/>
<rect x="801" y="753" width="81" height="1" fill="#404040"/>
<rect x="881" y="723" width="1" height="31" fill="#404040"/>
<rect x="802" y="724" width="78" height="1" fill="#d4d0c8"/>
<rect x="802" y="724" width="1" height="28" fill="#d4d0c8"/>
<rect x="802" y="752" width="79" height="1" fill="#808080"/>
<rect x="880" y="724" width="1" height="29" fill="#808080"/>
<text x="817.2" y="743.0" font-size="14" fill="#000000" textLength="50.8" lengthAdjust="spacingAndGlyphs" stroke="#d4d0c8" stroke-width="0.22">Отмена</text>
<rect x="889" y="723" width="83" height="31" fill="#d4d0c8"/>
<rect x="889" y="723" width="82" height="1" fill="#ffffff"/>
<rect x="889" y="723" width="1" height="30" fill="#ffffff"/>
<rect x="889" y="753" width="83" height="1" fill="#404040"/>
<rect x="971" y="723" width="1" height="31" fill="#404040"/>
<rect x="890" y="724" width="80" height="1" fill="#d4d0c8"/>
<rect x="890" y="724" width="1" height="28" fill="#d4d0c8"/>
<rect x="890" y="752" width="81" height="1" fill="#808080"/>
<rect x="970" y="724" width="1" height="29" fill="#808080"/>
<text x="903.2" y="743.0" font-size="14" fill="#000000" textLength="55.3" lengthAdjust="spacingAndGlyphs" stroke="#d4d0c8" stroke-width="0.22">Закрыть</text>
</svg>
</body></html>
